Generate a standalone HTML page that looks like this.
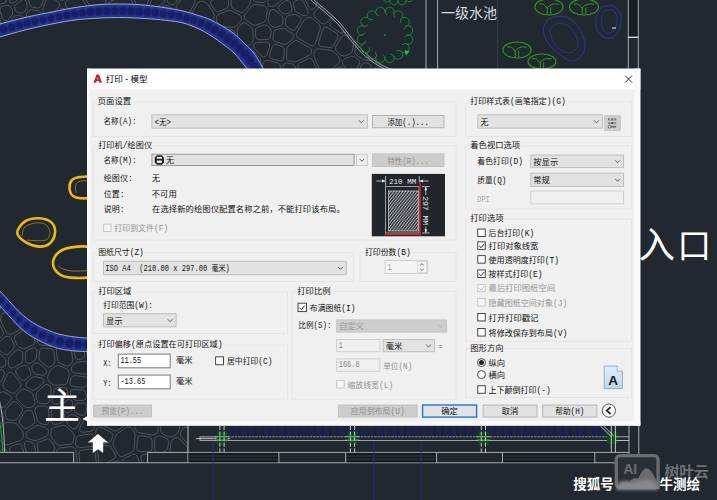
<!DOCTYPE html><html><head><meta charset="utf-8"><title>Print</title><style>html,body{margin:0;padding:0;background:#212830;overflow:hidden}body{width:717px;height:500px;font-family:"Liberation Sans",sans-serif}.sr{position:absolute;left:0;top:0;width:1px;height:1px;overflow:hidden;opacity:0;font-size:1px;line-height:1px;color:transparent;white-space:nowrap}svg text{font-family:"Liberation Mono","Noto Sans CJK SC",monospace}svg text.ss{font-family:"Liberation Sans","Noto Sans CJK SC",sans-serif}</style></head><body><svg width="717" height="500" viewBox="0 0 717 500" style="display:block"><rect x="0" y="0" width="717" height="500" fill="#212830"/>
<clipPath id="cA"><path d="M-6 26L-5.67 25.88L-5.37 25.75L-5.02 25.59L-4.56 25.41L-3.91 25.17L-2.98 24.86L-1.7 24.48L0 24L2.22 23.39L4.91 22.66L7.98 21.83L11.31 20.94L14.79 20.03L18.3 19.13L21.75 18.28L25 17.5L28.12 16.79L31.25 16.12L34.38 15.47L37.5 14.84L40.62 14.23L43.75 13.62L46.88 13.01L50 12.4L53.12 11.77L56.25 11.14L59.38 10.5L62.5 9.87L65.62 9.25L68.75 8.67L71.88 8.11L75 7.6L78.15 7.12L81.32 6.67L84.51 6.24L87.69 5.84L90.84 5.47L93.96 5.14L97.02 4.85L100 4.6L102.9 4.4L105.73 4.24L108.51 4.13L111.25 4.05L113.96 4L116.64 3.98L119.32 3.98L122 4L124.68 4.04L127.34 4.1L129.99 4.2L132.62 4.31L135.24 4.45L137.84 4.61L140.43 4.8L143 5L145.55 5.22L148.07 5.47L150.57 5.74L153.06 6.04L155.54 6.35L158.02 6.68L160.51 7.03L163 7.4L165.52 7.78L168.07 8.18L170.63 8.6L173.19 9.04L175.72 9.49L178.21 9.97L180.64 10.47L183 11L185.3 11.56L187.55 12.15L189.77 12.77L191.94 13.41L194.05 14.06L196.1 14.72L198.09 15.37L200 16L201.77 16.58L203.37 17.09L204.86 17.57L206.31 18.06L207.79 18.61L209.35 19.26L211.07 20.04L213 21L215.21 22.17L217.67 23.51L220.29 24.99L223 26.56L225.71 28.19L228.33 29.84L230.79 31.45L233 33L235 34.53L236.88 36.12L238.65 37.72L240.31 39.31L241.87 40.87L243.34 42.35L244.71 43.74L246 45L247.17 46.1L248.2 47.05L249.11 47.9L249.94 48.69L250.71 49.45L251.46 50.23L252.21 51.06L253 52L253.8 53.03L254.59 54.11L255.37 55.23L256.12 56.38L256.87 57.54L257.59 58.7L258.3 59.86L259 61L259.71 62.19L260.44 63.46L261.17 64.77L261.88 66.06L262.54 67.28L263.12 68.38L263.62 69.31L264 70L264 70L392 70L393 70L392.73 69.9L392.4 69.8L392.01 69.68L391.56 69.53L391.04 69.35L390.45 69.12L389.77 68.84L389 68.5L388.11 68.09L387.1 67.62L385.99 67.1L384.81 66.53L383.59 65.93L382.37 65.3L381.16 64.65L380 64L378.87 63.33L377.73 62.63L376.58 61.9L375.44 61.16L374.3 60.39L373.18 59.61L372.08 58.81L371 58L369.95 57.19L368.93 56.37L367.93 55.54L366.94 54.69L365.96 53.82L364.98 52.91L363.99 51.98L363 51L362 49.98L361 48.91L360 47.82L359 46.69L358 45.54L357 44.37L356 43.19L355 42L354 40.8L353 39.57L352 38.32L351 37.06L350 35.79L349 34.52L348 33.26L347 32L346.03 30.76L345.09 29.52L344.18 28.29L343.25 27.06L342.29 25.82L341.28 24.57L340.19 23.3L339 22L337.7 20.67L336.3 19.32L334.84 17.95L333.31 16.56L331.75 15.17L330.16 13.77L328.58 12.38L327 11L325.35 9.57L323.56 8.06L321.71 6.52L319.88 5L318.11 3.54L316.5 2.19L315.11 0.99L314 0L313.21 -0.78L312.68 -1.38L312.36 -1.84L312.19 -2.19L312.12 -2.45L312.1 -2.65L312.08 -2.82L312 -3L311 -3L-6 -3Z"/></clipPath>
<path clip-path="url(#cA)" d="M123.47 -13.38L121.96 -15.36L112.62 -20.71L109.91 -20.93L104.02 -18.73L102.18 -16.95L102.23 -14.39L107.26 -3.52L109.06 -1.85L111.51 -1.96L122.41 -7.03L123.95 -8.57L124.16 -10.73Z M-1.76 48.59L0.35 48.61L2.01 47.32L8.56 37.24L9.08 35.39L8.44 33.58L4.83 28.75L1.81 27.5L-13.99 29.77L-15.75 30.63L-16.68 32.35L-18.07 39.86L-17.7 42.03L-16.01 43.45Z M240.97 20.6L241.71 17.67L239.99 15.18L231.07 10.61L228.45 10.47L218.62 14.29L216.64 16.65L216.16 19.09L217 21.95L220.59 25.64L222.65 26.6L233.28 27.36L235.9 26.3Z M252.72 24.84L255.63 25.21L263.74 22.23L265.8 19.74L267.38 10.05L265.77 6.61L264.11 5.82L255.15 4.44L252.18 5.58L244.94 14.48L244.34 17.77L245.72 20.05Z M317.87 48.79L315.62 49.37L314.35 51.32L313.95 55.94L320.29 71.62L322.32 73.56L326.22 73.62L327.81 72.88L338.51 63.55L339.99 60.53L339.17 57.21L333.01 51.28L331.18 50.41Z M234.65 32.57L233.66 30.7L231.71 29.86L225.19 29.39L222.88 30.15L221.77 32.31L220.83 43.51L221.58 45.86L223.78 46.97L232.95 47.66L235.53 46.65L236.35 44Z M306.24 15.54L308.09 13.73L307.99 11.15L303.22 1.34L301.71 -0.15L299.59 -0.37L295.76 0.56L293.75 2.06L293.43 4.54L295.04 10.23L296.61 12.18L302.99 15.6Z M17.44 15.19L14.37 16.3L7.8 24.33L7.08 26.28L7.72 28.27L11.28 33.04L13.4 34.29L16.28 34.7L26.49 31.28L28.64 28.49L28.39 26.06L23.79 17.59L21.58 15.97Z M280.47 66.88L280.05 64.6L278.2 63.2L268.07 60.31L265.43 60.6L263.55 62.26L262.41 64.66L262.43 67.45L268.62 80.05L270.39 81.64L272.78 81.57L276.56 79.91L278.42 77.58Z M91.52 8.28L88.85 9.81L83.06 19.24L83 22.48L83.92 24.12L86.6 25.76L97.21 26.11L99.4 25.34L104.5 20.97L105.49 19.42L106.88 14.55L106.75 12.4L105.72 10.02L104.51 8.6L102.72 8.09Z M272.99 37.98L273.45 40.1L275.15 41.44L283.74 44.3L286.77 43.74L292.69 38.9L293.81 35.85L292.36 33.54L284.9 28.74L282.48 28.31L276.22 29.69L274.55 30.64L273.74 32.39Z M75.59 -10.56L76.68 -12.78L75.99 -15.48L71.68 -20.55L68.89 -21.66L50.74 -19.26L47.88 -17.34L46.53 -15.31L45.77 -11.49L46.15 -9.23L48.45 -6.34L60.82 -0.07L62.68 0.25L64.4 -0.54Z M358.61 39.92L356.42 42.4L354.74 51.66L356.04 54.85L363.81 59.89L370.38 60.8L372.26 60.49L373.62 59.17L380.31 47.04L380.42 44.18L378.21 42.37L363.08 38.97Z M202.05 1.38L200.08 1.34L197.84 2.89L189.57 17.11L189.74 20.59L193.09 25.25L195.6 26.58L201.56 26.35L211.9 20.99L213.57 18.78L214.21 15.55L213.73 13.14L207.54 3.9L205.88 2.64Z M382.2 84.81L384.18 83.66L384.89 81.48L384.51 74.29L383.16 71.85L377.94 68.16L375.1 67.74L373.06 69.77L369.17 81.46L369.25 83.67L370.74 85.31L373.72 86.15Z M310.76 45.53L313.51 45.74L315.41 43.73L320.41 28.1L319.54 24.78L312.18 17.97L308.88 17.33L306.1 18.37L304.48 19.72L296.69 32.72L296.29 34.94L298.02 38.15Z M314.53 12.52L313.82 14.76L314.84 16.89L321.68 23.22L323.94 24.07L326.15 23.1L334.41 14.59L335.27 11.86L334.53 7.12L333.15 4.96L330.63 4.5L319.83 7.05L318.08 8.15Z M239.04 44.36L240.44 46.56L243 46.99L248.99 45.44L250.75 44.27L252.65 41.75L253.3 39.64L252.72 29.51L251.34 27.05L245.82 23.27L243.62 22.74L241.62 23.79L237.77 28.11L237 30.71Z M330.79 22.05L329.91 24.65L331.37 26.97L340.27 32.65L342.52 33.1L346.5 31.77L347.35 29.91L348.16 22.19L347.71 20.19L346.14 18.87L339.21 16.18L335.75 16.93Z M343.37 35.6L341.11 37.19L335.67 46.9L335.29 48.94L336.24 50.78L341 55.35L344.32 56.05L350.08 53.92L352.13 51.49L353.87 41.86L352.76 38.81L349.04 35.75L346.47 35.07Z M376.05 60.16L375.73 62.42L377.01 64.32L384.55 69.64L387.45 70.05L394.26 67.68L395.83 66.47L396.4 64.57L396.11 53.52L394.25 50.69L386.59 47.18L384.25 47.05L382.45 48.54Z M127.72 -5.2L124.84 -5.29L110.13 1.56L108.51 3.27L107.62 5.48L107.65 7.94L108.85 10.72L111.12 12.58L127.25 16.04L129.19 15.85L130.66 14.57L134.03 8.97L134.16 5.9L129.48 -3.58Z M311.4 52.77L311.43 49.62L310.11 48.16L297.61 40.91L295.75 40.49L293.98 41.21L288.05 46.06L286.88 48.37L286.42 57.39L287.09 59.52L288.99 60.69L294.65 61.8L296.71 61.52L309.7 54.98Z M318.79 0.92L320.12 3.2L322.71 3.7L328.73 2.28L330.86 0.59L330.92 -2.13L327.76 -9.25L325.78 -11.01L323.16 -10.68L319.62 -8.51L318.11 -5.44Z M151.59 -14.55L149.69 -15.43L147.66 -14.96L134.15 -6.49L132.77 -4.65L132.98 -2.36L136.37 4.51L139.17 6.29L143.92 6.38L145.77 5.84L146.97 4.34L152.77 -10.68Z M81.43 -14.33L79.44 -12.34L79.79 -9.56L88.76 4.23L91.5 5.68L102.71 5.49L105.62 3.48L105.97 -0.09L98.56 -16.15L96.93 -17.74L93.29 -18.41Z M66.21 1.33L65.16 3.33L65.69 5.52L73.53 17.04L75.49 18.37L79.66 18.68L81.14 17.41L86.44 8.77L86.39 5.35L79.34 -5.48L77.08 -6.9L74.52 -6.11Z M260.02 63.63L261.01 60.29L260.22 58.61L251.7 49.2L248.53 48.25L242.36 49.84L240.61 51.01L239.96 53L240.21 65.11L241.88 67.85L245.26 68.7L257.95 65.34Z M270.84 6.48L274.51 5.76L283.85 -1.31L285.09 -4.33L283.73 -13.49L282.18 -15.78L279.42 -16.01L273.5 -13.75L271.56 -11.62L267.64 2.42L268.58 5.65Z M30.81 -5.27L28.89 -3.87L28.47 -1.52L29.73 4.51L30.62 6.14L32.27 7L37.58 8L39.77 7.62L41.19 5.92L44.57 -3.67L44.53 -5.93L43 -7.59L40.76 -7.83Z M12.05 -16.74L9.63 -15.84L8.66 -13.45L9.1 0.17L10 2.29L12.09 3.25L14.29 2.56L21.89 -3.48L23.08 -5.71L22.29 -8.11L15.64 -15.59Z M179.92 -22.57L177.85 -22.5L176.26 -21.17L173.66 -16.9L173.22 -14.83L174.17 -12.94L181.05 -6.24L183.58 -5.35L185.94 -5.56L188.16 -6.76L188.82 -9.19L187.55 -18.32L185.31 -20.95Z M245.33 -10.74L243.01 -12.58L240.18 -11.73L232.3 -4.05L231.34 -1.81L231.21 5.75L232.95 8.65L240.08 12.31L242.2 12.59L244.02 11.48L250.04 4.09L250.48 0.76Z M220.31 -19.85L218.95 -17.15L219.12 -10.57L219.78 -8.71L221.42 -7.59L227.91 -5.68L231.05 -6.46L237.08 -12.34L238.04 -14.85L236.76 -17.2L228.8 -23.13L226.93 -23.76L225.05 -23.18Z M2.63 18.76L4.02 20.51L6.22 20.92L8.15 19.8L12.39 14.61L12.9 11.43L11.53 7.88L8.9 5.55L6.44 5.24L2.13 6.45L0.17 8.03L-0.05 10.53Z M354.54 77.21L354.19 79.57L355.56 81.52L359.63 84.15L362.19 84.56L364.05 84.07L366.26 81.98L371.13 67.34L370.81 64.65L368.53 63.17L365.35 62.72L362.15 64.27Z M47.03 17.87L50.44 16.87L59.21 6.43L59.89 3.74L58.2 1.52L50.68 -2.3L48.04 -2.41L46.21 -0.51L42.91 8.87L42.93 11.06L44.74 15.86Z M167.19 -11.28L165.76 -9.84L165.49 -7.83L167.19 1.18L168.72 3.34L170.81 4.57L173.14 4.93L175.09 3.59L178.47 -1.47L178.99 -3.58L178.04 -5.54L172.09 -11.34L170.34 -12.21Z M268.65 -10.87L268.49 -13.05L266.96 -14.61L255.31 -20.2L253.43 -20.48L251.73 -19.64L248.09 -16.2L247.14 -14.5L247.36 -12.57L252.99 -0.01L255.42 1.85L261.9 2.85L264.12 2.37L265.47 0.54Z M309.22 7.72L310.7 9.2L312.79 9.44L315.85 6.77L316.55 4.41L315.59 -4.6L314.74 -6.46L312.94 -7.42L309.27 -8.04L307.2 -7.7L305.79 -6.15L304.81 -3.86L304.87 -1.2Z M403.53 75.73L403.38 73.87L402.21 72.41L398.93 70.17L396.07 69.8L389.31 72.16L387.71 73.4L387.17 75.35L387.6 83.52L388.67 85.73L390.86 86.7L398.4 86.96L400.47 86.29L401.64 84.44Z M195.8 -2.64L197.84 -2.03L199.81 -2.84L200.83 -4.71L203.34 -19.8L202.52 -22.52L199.94 -24.4L198.01 -24.19L192.07 -21.55L190.57 -20.18L190.2 -18.18L191.78 -6.77L193.07 -4.62Z M219.96 -5.31L216.91 -4.62L211.52 0.24L210.49 2.23L211 4.4L214.93 10.25L216.62 11.53L218.74 11.46L226.57 8.41L228.04 7.26L228.62 5.48L228.71 -0.29L228.09 -2.24L226.42 -3.41Z M149.57 4.82L149.67 7.36L151.59 9.02L154.12 8.76L162.84 3.88L164.17 2.44L164.42 0.49L162.84 -7.83L160.46 -10.34L158.59 -10.79L156.35 -10.52L154.85 -8.84Z M176.29 6.47L176.03 9.58L178.26 14.44L180.49 16.24L184.06 17.02L186.03 16.82L187.5 15.5L194.61 3.27L194.98 1L193.73 -0.93L191.36 -2.65L189.19 -3.25L183.89 -2.76L181.52 -1.36Z M261.48 56.13L263.42 57.15L265.56 56.68L266.9 54.94L269.64 46.2L269.13 43.29L266.46 42.04L256.86 42.43L254.12 44.12L253.48 46.19L254.3 48.2Z M274.92 9.98L272.85 9.24L270.79 10L269.71 11.92L268.3 20.55L269.14 23.27L272.06 26.35L275.07 27.28L280.29 26.13L282.08 25.03L282.81 23.07L282.91 18.2L281.76 15.67Z M342.24 68.04L340.04 66.92L337.7 67.7L332.8 71.98L331.7 74.53L333.01 76.97L341.36 83.07L344.49 83.44L348.45 81.76L350.32 79.56L349.64 76.74Z M287.14 62.97L284.73 63.46L283.38 65.51L281.2 76.89L281.51 78.97L283.05 80.41L293.93 85.24L296.05 85.4L297.9 84.07L298.45 81.51L295.26 66.55L292.75 64.08Z M303.98 -8.51L303.9 -11.2L301.54 -15.94L298.65 -17.72L289.42 -17.63L287.02 -16.51L286.29 -13.96L287.72 -4.28L290.01 -1.58L292.31 -1.27L300.31 -3.22L302.5 -5.06Z M349.83 31.17L350.98 33.98L354.57 36.94L357.56 37.52L359.23 37L361.42 34.55L363.75 22.43L363.43 20.32L361.85 18.88L357.56 17.06L354.55 17.34L352.3 18.82L350.88 21.16Z M291.5 29.9L293.96 30.32L295.98 28.85L300.63 21.09L300.97 18.59L299.4 16.62L295.46 14.52L292.86 14.33L287.6 16.23L286.09 17.37L285.49 19.17L285.38 24.15L286.85 26.91Z M6.12 -11.36L4.7 -13.92L1.8 -14.25L-9.57 -9.98L-11.29 -8.43L-11.52 -6.13L-9.53 1.04L-7.61 3.17L-3.67 4.71L-1.64 4.81L4.16 3.18L5.88 1.99L6.49 -0Z M261 82.08L263.28 81.67L264.69 79.83L264.48 77.52L260.76 69.95L259.21 68.45L257.07 68.27L249.14 70.36L247.09 72.03L246.99 74.66L248.42 78.16L250.78 80.1Z M276.29 44.56L273.82 44.75L272.23 46.64L269.71 54.66L269.95 57.14L271.89 58.7L279.71 60.92L282.45 60.45L283.78 58.01L284.21 49.67L283.65 47.7L282.02 46.47Z M167.86 5.86L164.68 5.82L156.3 10.52L154.87 12.19L154.85 14.39L158.5 24.64L160.58 26.63L163.41 26.15L174.29 18.15L175.49 16.38L175.31 14.25L173.22 9.67L171.93 8.24Z M58.29 27.19L60.89 26.68L69.14 20.76L70.43 18.71L69.92 16.36L65.3 9.55L62.81 8.16L60.2 9.29L52.71 18.21L51.96 20.11L52.52 22.08L54.91 25.54Z M213.74 47.47L216.61 47.22L218.12 44.77L219.38 29.71L218.49 27.21L215.81 24.45L214.03 23.53L212.05 23.84L205.74 27.11L204.16 28.99L204.38 31.44L212.01 45.95Z M26.9 8.56L27.41 6.11L26.55 1.98L25.46 0.18L23.48 -0.53L21.49 0.16L15.53 4.9L14.45 6.54L15.38 10.63L17.73 12.59L21.33 13.28L24.5 11.99Z M209.24 -19.7L206.83 -19.17L205.52 -17.08L203.32 -3.79L203.74 -1.61L205.68 -0.16L208.82 -0.83L215.5 -6.84L216.56 -9.31L216.38 -15.83L215.61 -17.83L213.75 -18.9Z M279.44 5.29L278.18 7.75L279.32 10.26L283.12 13.42L286.23 13.96L289.95 12.62L291.7 11.08L291.93 8.77L290.18 2.59L288.14 0.44L285.22 0.92Z M-1.88 25.4L0.38 23.92L0.71 21.24L-3.32 8.89L-5.19 6.91L-7.31 6.08L-9.43 6L-11.12 7.25L-19.35 19.33L-19.47 22.75L-17.77 25.67L-16.39 26.94L-14.55 27.22Z M31.69 9.54L28.48 10.85L26.58 13.56L26.39 16.92L29.28 22.24L31.28 23.81L33.79 23.43L40.49 19.23L41.82 17.54L41.78 15.39L40.81 12.81L38.41 10.8Z M318.56 42.43L318.91 45.13L321.22 46.58L329.99 47.65L331.83 47.32L333.17 46.04L337.82 37.75L338.13 35.41L336.75 33.49L327.52 27.6L324.71 27.29L322.75 29.33Z M344.6 58.72L342.33 61.73L342.92 64.82L349.4 72.44L352.11 73.56L354.59 71.99L359.33 63.94L359.7 61.64L358.42 59.7L354.13 56.68L351.18 56.29Z M255.73 36.72L256.78 38.91L259.06 39.74L267.5 39.4L269.53 38.57L270.55 36.63L271.29 31.05L270.44 28.43L267.75 25.59L264.33 24.79L257.48 27.3L255.9 28.54L255.38 30.48Z M300.21 77.29L301.94 79.5L304.75 79.49L315.36 74.26L316.93 72.53L316.91 70.19L312.86 60.18L311.02 58.38L308.45 58.52L299.6 62.97L298.15 64.45L297.91 66.5Z" fill="none" stroke="#5c6169" stroke-width="0.8"/>
<clipPath id="cB"><path d="M-6 299L-5.56 299.51L-5.02 300.16L-4.37 300.94L-3.62 301.81L-2.81 302.77L-1.92 303.8L-0.98 304.89L0 306L1.06 307.19L2.22 308.48L3.46 309.85L4.75 311.27L6.07 312.73L7.41 314.18L8.72 315.62L10 317L11.25 318.36L12.5 319.74L13.75 321.13L15 322.5L16.25 323.85L17.5 325.16L18.75 326.41L20 327.6L21.25 328.72L22.5 329.8L23.75 330.83L25 331.81L26.25 332.76L27.5 333.67L28.75 334.55L30 335.4L31.25 336.21L32.5 336.98L33.75 337.71L35 338.4L36.25 339.07L37.5 339.72L38.75 340.36L40 341L41.25 341.63L42.5 342.25L43.75 342.86L45 343.45L46.25 344.02L47.5 344.57L48.75 345.1L50 345.6L51.22 346.07L52.38 346.52L53.53 346.95L54.69 347.35L55.88 347.73L57.15 348.1L58.51 348.46L60 348.8L61.66 349.13L63.47 349.46L65.39 349.77L67.38 350.06L69.38 350.34L71.34 350.59L73.23 350.81L75 351L76.66 351.15L78.28 351.27L79.85 351.36L81.38 351.43L82.85 351.47L84.28 351.52L85.66 351.56L87 351.6L88.33 351.65L89.67 351.68L90.99 351.71L92.25 351.74L93.42 351.76L94.45 351.77L95.33 351.79L96 351.8L96 351.8L96 426L188 426L188 452.4L147.6 452.4L147.6 463L73.6 463L73.6 452.4L-6 452.4Z"/></clipPath>
<path clip-path="url(#cB)" d="M85.59 392.54L84.58 390.83L82.76 390.04L73.81 389.2L71.24 390.13L70.33 392.72L70.56 394.92L71.49 396.86L74.23 399.58L76.54 400.51L83.38 400.37L85.83 399.15L86.45 396.49Z M12.78 373.25L10.92 372.09L8.76 372.39L7.29 374.01L3.09 384.34L3 386.47L4.69 389.07L11.41 392.94L13.47 393.33L15.33 392.37L20.21 387.23L21.09 385.18L20.42 383.06Z M-21.02 445.54L-23.08 447.71L-22.44 450.63L-14.47 460.1L-11.74 461.41L-9.78 461.28L-8.27 460.02L-0.26 447.4L-0.32 443.87L-1.94 441.52L-3.57 440.29L-5.61 440.3Z M119.11 409.06L119.38 412.35L126.98 422.88L129.86 424.31L132.73 423.34L142.01 413.4L142.82 411.79L143.68 407.14L142.59 404.11L130.84 394.24L128.13 393.56L125.92 395.28Z M25.47 325.81L26.82 324.07L26.29 320.84L25.21 319.47L15.02 312.16L12.85 311.58L4.72 312.35L2.75 313.28L1.51 315.13L0.5 318.86L0.72 321.13L6.12 331.92L8.23 333.6L10.41 334.13L12.86 333.73Z M86.49 361.76L84.12 361.21L76.44 362.46L74.47 363.6L71.6 367.13L71.29 370.83L73.9 372.89L85.19 374.28L87.84 373.37L88.76 370.72L87.97 364.09Z M94.72 420.22L97.01 420.7L99.01 419.49L104.77 412.01L105.43 409.92L104.6 407.9L100.92 403.88L98.43 402.83L92.88 403.06L90.93 403.83L89.87 405.64L88.29 413.62L88.48 415.49L89.68 416.93Z M70.98 469.18L72.86 468.22L76.14 464.77L77.01 462.29L76.01 450.8L75.26 449.01L74.15 447.7L71.32 446.58L59.68 448L57.15 449.87L54.78 455.18L54.61 457.28L57.41 468.19L58.73 470.05L60.95 470.56Z M118.44 455.1L120.28 456.62L122.66 456.43L132.31 451.65L134.09 449.03L135.17 434.77L134.71 432.85L131.99 428.41L129.79 426.93L126.24 427.29L117.45 433.62L116.39 434.93L113.02 442.6L113.14 445.42Z M-19.89 353.85L-18 354.72L-15.97 354.25L-6.59 348.36L-5.02 345.54L-6.42 342.27L-16.79 335.54L-19.05 335.06L-21.04 336.24L-26.67 343.35L-27.36 345.56L-26.38 347.65Z M22.36 438.96L23.27 436.71L23.24 432.96L22.53 430.95L17.05 424.22L14.82 423.05L7.29 422.45L4.75 423.41L-0.88 429.18L-1.78 431.56L-1.55 436.62L-1 438.29L2.57 443.49L4.37 444.77L6.95 444.91L20.49 440.37Z M8.67 365.07L9.5 366.95L11.3 367.94L13.34 367.62L21.14 363.55L22.85 360.64L22.69 353.51L22.1 351.72L18.68 349.87L16.82 349.77L15.22 350.72L9.04 357.48L8.21 359.92Z M37.86 342.5L38.84 344.15L40.58 344.94L52.66 346.45L55.27 345.58L58.71 342.27L59.69 339.76L59.06 329.77L57.62 327.3L51.94 323.57L49.24 323.19L37.27 326.88L35.44 328.34L35.1 330.66Z M101.15 427.34L98.65 427.16L96.8 428.83L95.77 431.04L95.67 433.52L98.51 441.03L99.73 442.56L101.61 443.1L108.06 442.89L110.89 440.98L112.79 436.65L112.87 434.29L111.31 432.52Z M152.1 435.1L156.15 433.95L158.07 431.06L158.16 424.48L156.48 421.62L146.3 416.12L144.27 415.78L142.44 416.75L135.32 424.38L134.47 426.24L134.92 428.24L136.65 431.05L138.77 432.51Z M156.62 471.35L157.59 473.94L160.21 474.8L162.75 474.48L164.75 473.42L173.74 463.15L174.54 460.94L173.6 458.78L169.34 454.52L166.11 453.73L159.98 455.68L157.76 458.45Z M53.4 427.72L51.73 428.83L51.04 430.71L50.89 435.28L51.5 437.26L56.49 444.11L59.46 445.41L70.28 444.09L72.04 443.29L73.02 441.63L74.29 436.06L73.3 432.96L65.45 425.96L62.48 425.26Z M183.1 421.22L183.72 423.58L185.82 424.82L199.41 426.76L201.3 426.45L202.68 425.11L204.77 421.22L205.08 419.03L202.4 406.64L201.05 404.65L198.7 404.17L187.38 406.21L185.63 407.15L184.77 408.93Z M92.49 466.62L94.55 466.49L96.1 465.12L96.49 463.08L94.88 451.83L93.68 449.76L91.39 449.1L81.72 450.1L79.58 451.25L78.86 453.56L79.5 460.95L80.24 462.73L81.86 463.76Z M74.14 409.3L74.38 411.48L75.99 412.98L81.46 415.26L84.16 415.13L85.77 412.96L87 406.73L86.33 404.09L83.85 402.96L78.1 403.08L76.19 403.76L75.1 405.46Z M67.45 390.25L66.36 388.16L64.13 387.38L56.7 387.72L54.71 388.53L53.68 390.4L52.04 400.51L52.65 402.97L54.86 404.21L58.26 403.67L66.66 397.16L67.88 394.3Z M2.67 367.2L5.09 366.19L5.94 363.72L5.61 359.97L4.53 357.85L-2.57 351.6L-4.42 350.82L-6.38 351.3L-12.81 355.33L-14.27 357.58L-13.51 360.16L-8.44 365.9L-6.12 366.98Z M179.69 428.23L179.66 425.54L177.6 423.83L165.81 420.67L162.34 421.61L160.76 424.32L160.67 431.08L162.52 434.03L168.87 436.98L171.73 436.89L176.14 434.52L177.55 433.01Z M50.58 369.94L47.71 376.31L47.62 378.3L49.05 381.44L52.48 384.43L54.73 385.21L64.2 384.78L66.02 384.1L67.12 382.49L69.35 374.91L68.45 370.64L66.62 368.77L58.6 365.59L55.42 366.07Z M54.66 406.8L52.14 407.64L51.13 410.1L51.56 421.47L52.86 423.92L55.6 424.43L61.73 422.77L63.96 420.59L64.88 417.45L64.11 414.31L57.83 407.87Z M46.8 366.42L48.8 367.13L50.8 366.43L53.85 364L55.03 361.08L53.79 351.62L52.87 349.77L51.01 348.86L43.28 347.9L40.9 348.57L39.71 350.74L38.92 358.18L40.09 361.01Z M89.43 397.95L90.6 399.8L92.68 400.47L97.54 400.27L100.37 398.3L102.88 392.23L102.84 389.7L99.22 381.58L96.6 379.7L95.18 379.57L92.09 381.18L88.13 388.19L87.79 390.45Z M-6.24 406.08L-8.69 405.74L-10.65 407.26L-13.48 412.25L-13.8 414.59L-11.97 421.98L-10.46 423.99L-5.55 426.8L-3.52 427.2L-1.67 426.26L2.74 421.74L3.6 418.94L2.42 412.47L0.9 410.29Z M101.14 468.44L99.74 469.82L99.4 471.77L99.91 475.27L100.59 476.83L106.71 484.37L108.57 485.5L110.72 485.17L122.54 478.75L123.98 477.15L124.07 475L120.37 463.02L118.57 461.02L115.89 461.1Z M16.75 394.65L15.87 396.91L16.83 399.14L24.68 406.79L27.27 407.68L31.22 407.24L34.11 405.44L35.06 402.29L33.19 394.84L31.64 392.82L25.2 389.24L23.16 388.87L21.32 389.83Z M91.79 374.1L92.73 376.01L94.66 376.91L98.49 376.62L99.79 375.07L104.67 362.7L104.64 360.26L102.89 358.56L100.46 358.57L92.65 361.85L91.13 363.19L90.72 365.18Z M75.35 443.1L76.64 446.61L79.41 447.73L93.42 446.27L95.81 444.77L96.08 441.96L93.83 436.01L92.48 434.39L90.42 433.97L79.23 435.46L77.5 436.27L76.53 437.92Z M28.81 367.59L26.85 365.68L23.11 365.46L17.19 368.54L15.55 370.7L16.15 373.35L20.85 379.39L23.05 380.6L25.45 379.85L29.78 376.16L30.8 374.53L30.7 372.6Z M34.73 360.5L36.32 358.06L37.04 351.24L36.51 349.12L34.74 347.83L32.55 347.98L27.19 350.38L25.29 353.37L25.45 360.24L26.06 362.06L27.77 363.25L30.4 362.99Z M57.6 360.63L59.59 363.19L66.38 365.88L68.37 366L70.04 364.92L72.22 362.25L72.88 359.64L70.67 347.89L68.48 345.43L63.27 343.8L60.1 344.54L57.16 347.36L56.21 350.09Z M25.85 433.87L26.46 437.2L28.01 438.36L34.05 440.47L36.24 440.44L46.28 436.63L48.34 433.74L48.42 431.2L47.86 429.28L46.26 428.07L38.62 425.47L35.89 425.79L27.35 431.13Z M50.09 454.87L52.92 452.97L54.75 448.86L54.41 445.68L50.51 440.32L48.84 439.14L46.79 439.21L39.15 442.11L37.49 443.54L37.13 445.69L38.4 452.51L39.54 454.41L41.64 455.12Z M20.65 290.36L20.72 288.23L19.43 286.54L17.14 285.7L6.06 285.91L3.57 287.19L0.85 290.79L0.28 293.42L3.37 307.06L4.62 308.95L6.8 309.54L11.52 309.09L14.2 307.06Z M69.86 382.38L70.28 385.08L72.63 386.47L83.37 387.48L86.46 385.87L88.76 381.79L88.83 378.78L86.36 377.04L74.65 375.6L72.5 376.11L71.19 377.88Z M65.63 412.15L67.25 413L69.06 412.72L71.16 410.52L72.82 403.86L72.04 401.07L69.27 399.35L67.3 399.96L62.17 403.93L61.04 406.04L61.87 408.29Z M26.73 382.18L25.63 384.93L27.26 387.41L31.9 389.99L33.76 390.38L35.52 389.65L42.94 383.41L44.07 381.32L43.44 379.03L41.41 377.8L34.87 376.72L32.27 377.45Z M-4.79 459.39L-5.08 462.22L-3 464.17L6.85 467.12L10.15 466.19L12.59 462.61L12.23 460.71L6.61 450.31L4.99 448.86L2.82 448.79L1.09 450.12Z M157.99 435.98L155.1 437.84L154.6 439.63L154.85 450.28L156.19 452.81L159.01 453.26L165.3 451.26L167.49 448.73L168.54 442.26L168.2 440.25L166.72 438.85L160.62 436.01Z M80.36 345.04L77.59 344.55L75.71 345.1L73.89 346.49L73.48 348.74L75.01 356.91L76.31 358.93L78.65 359.46L81.8 358.95L83.7 357.88L84.47 355.83L84.52 349.72L83.22 347.13Z M143.87 454.32L141.22 455.7L140.86 458.66L145.21 470.09L147.48 472.07L150.23 472.7L152.83 472.17L154.14 469.87L155.2 457.84L154.38 455.41L152.03 454.36Z M174.47 455.97L176.3 456.88L178.31 456.5L186.37 451.94L187.95 449.68L187.18 447.02L179.5 438.45L177.67 437.43L175.6 437.76L172.94 439.2L171.29 441.5L169.98 449.6L170.87 452.37Z M28.5 441.29L26.23 441.35L24.57 442.9L24.36 445.16L27.79 457.59L29.01 459.34L31.05 459.94L33.02 459.12L35.09 457.26L36.09 454.3L34.37 445.04L32.27 442.6Z M69.19 415.57L67.58 417.51L66.55 421L67.49 424.29L72.08 428.39L74.8 429.14L77.06 427.46L80.21 421.3L80.37 418.74L78.6 416.88L73.37 414.7L70.68 414.81Z M111.12 447.15L108.22 445.49L100.25 445.74L98.08 446.69L97.16 449.41L98.95 461.93L100.63 464.31L103.55 464.34L113.92 459.18L115.54 457.27L115.3 454.78Z M-1.27 391.05L-0.27 389.06L-0.81 386.91L-2.62 385.62L-12.84 382.88L-15.21 383.17L-16.82 384.05L-18.47 386.6L-18.79 390.73L-17.56 393.51L-12.25 397.64L-10.14 398.3L-8.1 397.44Z M48.5 409.39L47.58 407.27L45.46 406.32L38.78 405.98L35.73 407.47L34.8 410.7L37.63 420.91L39.69 423.09L44.74 424.81L47.68 424.34L48.97 421.65Z M101.6 420.4L101.01 423.05L102.68 425.2L113.83 430.88L117.16 430.63L122.59 426.72L123.88 424.63L123.32 422.25L116.83 413.26L114.64 411.96L110.49 411.43L107.55 412.65Z M79.38 482.53L81.33 484.32L83.96 484.03L95.56 477.11L97.08 473.9L96.88 472.5L94.55 469.87L80.73 466.15L77.58 467.03L75.7 469.01L75.07 472.47Z M45.99 403.74L48.16 403.03L49.31 401.06L51.3 388.85L50.24 385.93L47.17 384.26L45.08 385.01L36.97 391.82L35.93 395.05L37.43 401.04L38.5 402.73L40.37 403.46Z M-23.49 315.14L-24.53 317.22L-23.89 319.46L-20.06 324.45L-18.31 325.6L-16.22 325.43L-3.69 319.86L-1.76 317.24L-1.99 314.95L-3.71 313.41L-14.46 309.32L-17.75 309.94Z M191.78 448.26L193.82 449.32L196.25 448.71L203.52 443.21L204.64 441.61L204.63 439.66L201.97 431.56L199.38 429.39L185.45 427.4L183.45 427.76L182.08 429.26L180.49 432.81L181.02 436.25Z M-23.49 439.91L-21.93 441.99L-19.35 442.22L-6.41 437.82L-4.8 436.6L-4.25 434.65L-4.36 432.2L-5.96 429.56L-11.82 426.21L-14.22 425.89L-21.55 427.81L-23.5 429.29L-24.61 431.2L-24.97 433.54Z M32.2 329.66L30.3 327.43L27.38 327.68L15.73 334.99L14.4 336.67L14.43 338.81L16.79 345.22L18.7 347.11L22.66 348.56L25.06 348.48L33.09 344.9L34.65 343.4L34.9 341.25Z M21.86 462.34L24.64 461.23L25.29 458.3L21.95 446.18L20.36 444.21L17.84 444L11.55 446.11L9.6 447.97L9.76 450.66L14.9 460.19L17.37 461.85Z M136.75 448.26L137.59 450.68L139.93 451.71L148.99 451.75L151.29 450.79L152.2 448.48L152.02 440.3L151.26 438.31L149.43 437.23L141.29 435.65L138.74 436.25L137.49 438.55Z M87.07 356.54L87.72 358.5L89.44 359.66L91.51 359.52L101.14 355.47L102.6 354.23L103.09 352.38L102.96 349.19L101.74 346.81L99.15 346.18L89.7 348.02L87.85 349.11L87.11 351.13Z M-2.21 383.04L0.04 382.81L1.58 381.15L4.42 374.17L4.13 371.21L1.53 369.77L-5.22 369.6L-8.19 371.43L-10.76 376.83L-10.78 379.55L-8.7 381.3Z M-13.57 293.75L-15.84 294.91L-16.54 297.35L-15.64 304.29L-13.6 306.87L-3.57 310.68L-1.32 310.69L0.38 309.21L0.69 306.98L-1.87 295.7L-3.07 293.84L-5.19 293.21Z M-5.61 398.67L-6.6 401.36L-5.04 403.77L0.79 407.2L2.92 407.61L4.82 406.56L10.66 399.93L11.42 397.29L9.85 395.04L4.74 392.09L2.77 391.69L0.95 392.53Z M5.75 409.44L5 412.12L5.95 417.35L6.95 419.15L8.85 419.97L14.31 420.41L17.23 418.99L22.14 411.6L22.66 409.49L21.71 407.54L16.44 402.39L14.08 401.48L11.8 402.56Z M126.67 474.61L128.32 476.54L130.86 476.66L140.16 473.16L141.95 471.48L142.03 469.03L137.1 456.1L135.28 454.26L132.69 454.37L124.49 458.43L122.97 460.03L122.85 462.24Z M-14.98 327.72L-16.58 329.29L-16.75 331.52L-15.42 333.33L-5.43 339.82L-3.41 340.32L-1.51 339.48L2.54 335.72L3.51 333.95L3.22 331.94L-0.45 324.61L-2.23 323.02L-4.61 323.11Z M46.45 372.25L46.54 370.31L45.48 368.7L38.92 363.4L37.19 362.72L35.38 363.13L33.2 364.38L31.81 366.05L31.83 368.21L33.33 372.24L35.77 374.24L42.58 375.36L44.66 374.98Z M23.03 427.46L24.99 428.6L27.21 428.15L33.48 424.23L34.77 422.68L34.87 420.66L32.58 412.42L31.29 410.62L27.52 410.27L25.21 411.68L19.76 419.87L19.23 421.8L19.94 423.66Z M179.91 458.58L178.3 461.06L179.41 463.8L190.23 473L192.68 473.74L194.79 473.48L196.98 472.21L197.56 469.74L194.92 454.99L193.13 452.66L190.2 452.77Z M11.56 338.54L9.3 336.54L7.93 336.21L5.01 336.97L-1.22 342.76L-2.19 344.52L-2.49 346.14L-1.45 349.12L4.29 354.17L6.58 354.96L8.76 353.93L13.48 348.76L14.12 345.5Z M79.86 427.68L79.61 429.94L80.92 431.8L83.14 432.31L91.17 431.24L93.65 429.43L94.91 426.73L95.09 424.5L93.76 422.7L88.24 419.09L85.66 418.68L83.64 420.31Z" fill="none" stroke="#5c6169" stroke-width="0.8"/>
<path d="M-6 26L-5.67 25.88L-5.37 25.75L-5.02 25.59L-4.56 25.41L-3.91 25.17L-2.98 24.86L-1.7 24.48L0 24L2.22 23.39L4.91 22.66L7.98 21.83L11.31 20.94L14.79 20.03L18.3 19.13L21.75 18.28L25 17.5L28.12 16.79L31.25 16.12L34.38 15.47L37.5 14.84L40.62 14.23L43.75 13.62L46.88 13.01L50 12.4L53.12 11.77L56.25 11.14L59.38 10.5L62.5 9.87L65.62 9.25L68.75 8.67L71.88 8.11L75 7.6L78.15 7.12L81.32 6.67L84.51 6.24L87.69 5.84L90.84 5.47L93.96 5.14L97.02 4.85L100 4.6L102.9 4.4L105.73 4.24L108.51 4.13L111.25 4.05L113.96 4L116.64 3.98L119.32 3.98L122 4L124.68 4.04L127.34 4.1L129.99 4.2L132.62 4.31L135.24 4.45L137.84 4.61L140.43 4.8L143 5L145.55 5.22L148.07 5.47L150.57 5.74L153.06 6.04L155.54 6.35L158.02 6.68L160.51 7.03L163 7.4L165.52 7.78L168.07 8.18L170.63 8.6L173.19 9.04L175.72 9.49L178.21 9.97L180.64 10.47L183 11L185.3 11.56L187.55 12.15L189.77 12.77L191.94 13.41L194.05 14.06L196.1 14.72L198.09 15.37L200 16L201.77 16.58L203.37 17.09L204.86 17.57L206.31 18.06L207.79 18.61L209.35 19.26L211.07 20.04L213 21L215.21 22.17L217.67 23.51L220.29 24.99L223 26.56L225.71 28.19L228.33 29.84L230.79 31.45L233 33L235 34.53L236.88 36.12L238.65 37.72L240.31 39.31L241.87 40.87L243.34 42.35L244.71 43.74L246 45L247.17 46.1L248.2 47.05L249.11 47.9L249.94 48.69L250.71 49.45L251.46 50.23L252.21 51.06L253 52L253.8 53.03L254.59 54.11L255.37 55.23L256.12 56.38L256.87 57.54L257.59 58.7L258.3 59.86L259 61L259.71 62.19L260.44 63.46L261.17 64.77L261.88 66.06L262.54 67.28L263.12 68.38L263.62 69.31L264 70L248 70L247.47 69.31L246.77 68.38L245.93 67.28L245 66.06L244.01 64.77L242.98 63.46L241.97 62.19L241 61L240.05 59.86L239.09 58.7L238.12 57.54L237.12 56.38L236.12 55.23L235.09 54.11L234.05 53.03L233 52L231.94 51.04L230.87 50.13L229.79 49.27L228.69 48.44L227.57 47.61L226.41 46.77L225.23 45.91L224 45L222.73 44.04L221.44 43.06L220.11 42.05L218.75 41.03L217.36 40.01L215.94 38.99L214.48 37.98L213 37L211.5 36.03L209.98 35.07L208.45 34.11L206.88 33.16L205.26 32.22L203.58 31.29L201.83 30.39L200 29.5L198.09 28.62L196.1 27.72L194.05 26.84L191.94 25.97L189.77 25.14L187.55 24.36L185.3 23.64L183 23L180.64 22.45L178.21 21.97L175.72 21.56L173.19 21.19L170.63 20.87L168.07 20.57L165.52 20.28L163 20L160.51 19.73L158.02 19.48L155.54 19.26L153.06 19.06L150.57 18.88L148.07 18.71L145.55 18.55L143 18.4L140.43 18.25L137.84 18.12L135.24 17.99L132.62 17.88L129.99 17.78L127.34 17.7L124.68 17.64L122 17.6L119.32 17.58L116.64 17.58L113.96 17.59L111.25 17.63L108.51 17.68L105.73 17.76L102.9 17.87L100 18L97.02 18.16L93.96 18.33L90.84 18.53L87.69 18.75L84.51 19L81.32 19.29L78.15 19.62L75 20L71.88 20.43L68.75 20.9L65.62 21.42L62.5 21.98L59.38 22.56L56.25 23.16L53.12 23.78L50 24.4L46.88 25.03L43.75 25.68L40.62 26.35L37.5 27.04L34.38 27.74L31.25 28.47L28.12 29.22L25 30L21.75 30.84L18.3 31.77L14.79 32.74L11.31 33.73L7.98 34.68L4.91 35.57L2.22 36.35L0 37L-1.7 37.5L-2.98 37.9L-3.91 38.2L-4.56 38.44L-5.02 38.62L-5.37 38.76L-5.67 38.88L-6 39Z" fill="#24339c"/>
<g fill="#181f5e" stroke="#1e2980" stroke-width="1.1"><circle cx="-4.19" cy="31.86" r="3.8"/><circle cx="3.55" cy="29.48" r="3.86"/><circle cx="11.42" cy="27.29" r="3.82"/><circle cx="19.27" cy="25.19" r="3.79"/><circle cx="27.08" cy="23.24" r="3.76"/><circle cx="35.01" cy="21.46" r="3.71"/><circle cx="42.95" cy="19.81" r="3.67"/><circle cx="50.95" cy="18.21" r="3.65"/><circle cx="58.93" cy="16.62" r="3.67"/><circle cx="66.88" cy="15.13" r="3.72"/><circle cx="74.71" cy="13.86" r="3.8"/><circle cx="82.68" cy="12.84" r="3.91"/><circle cx="90.66" cy="12.03" r="4.03"/><circle cx="98.78" cy="11.39" r="4.13"/><circle cx="106.81" cy="10.97" r="4.19"/><circle cx="114.86" cy="10.79" r="4.21"/><circle cx="122.94" cy="10.81" r="4.22"/><circle cx="130.99" cy="11.03" r="4.2"/><circle cx="139.09" cy="11.45" r="4.17"/><circle cx="147.21" cy="12.03" r="4.1"/><circle cx="155.26" cy="12.79" r="3.99"/><circle cx="163.23" cy="13.74" r="3.87"/><circle cx="171.31" cy="14.85" r="3.75"/><circle cx="179.12" cy="16.16" r="3.65"/><circle cx="186.5" cy="17.92" r="3.62"/><circle cx="193.78" cy="20.26" r="3.72"/><circle cx="201.06" cy="22.98" r="3.95"/><circle cx="208.12" cy="26.1" r="4.18"/><circle cx="214.88" cy="29.92" r="4.32"/><circle cx="221.49" cy="34.07" r="4.48"/><circle cx="228.06" cy="38.68" r="4.64"/><circle cx="234.36" cy="43.63" r="4.5"/><circle cx="239.61" cy="48.63" r="4.38"/><circle cx="244.94" cy="54.13" r="4.6"/><circle cx="249.9" cy="60.31" r="4.58"/><circle cx="254.03" cy="66.4" r="4.35"/><circle cx="256" cy="70" r="4.96"/></g>
<path d="M-6 26L-5.67 25.88L-5.37 25.75L-5.02 25.59L-4.56 25.41L-3.91 25.17L-2.98 24.86L-1.7 24.48L0 24L2.22 23.39L4.91 22.66L7.98 21.83L11.31 20.94L14.79 20.03L18.3 19.13L21.75 18.28L25 17.5L28.12 16.79L31.25 16.12L34.38 15.47L37.5 14.84L40.62 14.23L43.75 13.62L46.88 13.01L50 12.4L53.12 11.77L56.25 11.14L59.38 10.5L62.5 9.87L65.62 9.25L68.75 8.67L71.88 8.11L75 7.6L78.15 7.12L81.32 6.67L84.51 6.24L87.69 5.84L90.84 5.47L93.96 5.14L97.02 4.85L100 4.6L102.9 4.4L105.73 4.24L108.51 4.13L111.25 4.05L113.96 4L116.64 3.98L119.32 3.98L122 4L124.68 4.04L127.34 4.1L129.99 4.2L132.62 4.31L135.24 4.45L137.84 4.61L140.43 4.8L143 5L145.55 5.22L148.07 5.47L150.57 5.74L153.06 6.04L155.54 6.35L158.02 6.68L160.51 7.03L163 7.4L165.52 7.78L168.07 8.18L170.63 8.6L173.19 9.04L175.72 9.49L178.21 9.97L180.64 10.47L183 11L185.3 11.56L187.55 12.15L189.77 12.77L191.94 13.41L194.05 14.06L196.1 14.72L198.09 15.37L200 16L201.77 16.58L203.37 17.09L204.86 17.57L206.31 18.06L207.79 18.61L209.35 19.26L211.07 20.04L213 21L215.21 22.17L217.67 23.51L220.29 24.99L223 26.56L225.71 28.19L228.33 29.84L230.79 31.45L233 33L235 34.53L236.88 36.12L238.65 37.72L240.31 39.31L241.87 40.87L243.34 42.35L244.71 43.74L246 45L247.17 46.1L248.2 47.05L249.11 47.9L249.94 48.69L250.71 49.45L251.46 50.23L252.21 51.06L253 52L253.8 53.03L254.59 54.11L255.37 55.23L256.12 56.38L256.87 57.54L257.59 58.7L258.3 59.86L259 61L259.71 62.19L260.44 63.46L261.17 64.77L261.88 66.06L262.54 67.28L263.12 68.38L263.62 69.31L264 70" fill="none" stroke="#a4abcc" stroke-width="1"/>
<path d="M-6 39L-5.67 38.88L-5.37 38.76L-5.02 38.62L-4.56 38.44L-3.91 38.2L-2.98 37.9L-1.7 37.5L0 37L2.22 36.35L4.91 35.57L7.98 34.68L11.31 33.73L14.79 32.74L18.3 31.77L21.75 30.84L25 30L28.12 29.22L31.25 28.47L34.38 27.74L37.5 27.04L40.62 26.35L43.75 25.68L46.88 25.03L50 24.4L53.12 23.78L56.25 23.16L59.38 22.56L62.5 21.98L65.62 21.42L68.75 20.9L71.88 20.43L75 20L78.15 19.62L81.32 19.29L84.51 19L87.69 18.75L90.84 18.53L93.96 18.33L97.02 18.16L100 18L102.9 17.87L105.73 17.76L108.51 17.68L111.25 17.63L113.96 17.59L116.64 17.58L119.32 17.58L122 17.6L124.68 17.64L127.34 17.7L129.99 17.78L132.62 17.88L135.24 17.99L137.84 18.12L140.43 18.25L143 18.4L145.55 18.55L148.07 18.71L150.57 18.88L153.06 19.06L155.54 19.26L158.02 19.48L160.51 19.73L163 20L165.52 20.28L168.07 20.57L170.63 20.87L173.19 21.19L175.72 21.56L178.21 21.97L180.64 22.45L183 23L185.3 23.64L187.55 24.36L189.77 25.14L191.94 25.97L194.05 26.84L196.1 27.72L198.09 28.62L200 29.5L201.83 30.39L203.58 31.29L205.26 32.22L206.88 33.16L208.45 34.11L209.98 35.07L211.5 36.03L213 37L214.48 37.98L215.94 38.99L217.36 40.01L218.75 41.03L220.11 42.05L221.44 43.06L222.73 44.04L224 45L225.23 45.91L226.41 46.77L227.57 47.61L228.69 48.44L229.79 49.27L230.87 50.13L231.94 51.04L233 52L234.05 53.03L235.09 54.11L236.12 55.23L237.12 56.38L238.12 57.54L239.09 58.7L240.05 59.86L241 61L241.97 62.19L242.98 63.46L244.01 64.77L245 66.06L245.93 67.28L246.77 68.38L247.47 69.31L248 70" fill="none" stroke="#a4abcc" stroke-width="1"/>
<path d="M-6 284L-5.56 284.51L-5.02 285.16L-4.37 285.94L-3.62 286.81L-2.81 287.77L-1.92 288.8L-0.98 289.89L0 291L1.06 292.19L2.22 293.48L3.46 294.85L4.75 296.27L6.07 297.73L7.41 299.18L8.72 300.62L10 302L11.25 303.36L12.5 304.74L13.75 306.12L15 307.49L16.25 308.83L17.5 310.14L18.75 311.4L20 312.6L21.25 313.74L22.5 314.83L23.75 315.88L25 316.89L26.25 317.86L27.5 318.8L28.75 319.71L30 320.6L31.25 321.46L32.5 322.28L33.75 323.07L35 323.82L36.25 324.56L37.5 325.26L38.75 325.94L40 326.6L41.25 327.23L42.5 327.84L43.75 328.41L45 328.96L46.25 329.49L47.5 330.01L48.75 330.51L50 331L51.22 331.48L52.38 331.94L53.53 332.38L54.69 332.81L55.88 333.23L57.15 333.63L58.51 334.02L60 334.4L61.66 334.77L63.47 335.14L65.39 335.5L67.38 335.85L69.38 336.18L71.34 336.48L73.23 336.76L75 337L76.66 337.21L78.28 337.38L79.85 337.53L81.38 337.65L82.85 337.75L84.28 337.84L85.66 337.92L87 338L88.33 338.06L89.67 338.11L90.99 338.14L92.25 338.16L93.42 338.17L94.45 338.18L95.33 338.19L96 338.2L96 351.8L95.33 351.79L94.45 351.77L93.42 351.76L92.25 351.74L90.99 351.71L89.67 351.68L88.33 351.65L87 351.6L85.66 351.56L84.28 351.52L82.85 351.47L81.38 351.43L79.85 351.36L78.28 351.27L76.66 351.15L75 351L73.23 350.81L71.34 350.59L69.38 350.34L67.38 350.06L65.39 349.77L63.47 349.46L61.66 349.13L60 348.8L58.51 348.46L57.15 348.1L55.88 347.73L54.69 347.35L53.53 346.95L52.38 346.52L51.22 346.07L50 345.6L48.75 345.1L47.5 344.57L46.25 344.02L45 343.45L43.75 342.86L42.5 342.25L41.25 341.63L40 341L38.75 340.36L37.5 339.72L36.25 339.07L35 338.4L33.75 337.71L32.5 336.98L31.25 336.21L30 335.4L28.75 334.55L27.5 333.67L26.25 332.76L25 331.81L23.75 330.83L22.5 329.8L21.25 328.72L20 327.6L18.75 326.41L17.5 325.16L16.25 323.85L15 322.5L13.75 321.13L12.5 319.74L11.25 318.36L10 317L8.72 315.62L7.41 314.18L6.07 312.73L4.75 311.27L3.46 309.85L2.22 308.48L1.06 307.19L0 306L-0.98 304.89L-1.92 303.8L-2.81 302.77L-3.62 301.81L-4.37 300.94L-5.02 300.16L-5.56 299.51L-6 299Z" fill="#24339c"/>
<g fill="#181f5e" stroke="#1e2980" stroke-width="1.1"><circle cx="-6" cy="291.5" r="4.65"/><circle cx="-3.19" cy="294.78" r="3.14"/><circle cx="1.6" cy="300.24" r="3.1"/><circle cx="7.48" cy="306.75" r="3.14"/><circle cx="13.35" cy="313.15" r="3.15"/><circle cx="19.42" cy="319.28" r="3.37"/><circle cx="26.51" cy="325.39" r="3.69"/><circle cx="34.2" cy="330.62" r="3.91"/><circle cx="42.43" cy="334.93" r="4.04"/><circle cx="50.77" cy="338.59" r="4.21"/><circle cx="59.92" cy="341.57" r="4.35"/><circle cx="69.23" cy="343.24" r="4.34"/><circle cx="78.25" cy="344.33" r="4.29"/><circle cx="87.14" cy="344.81" r="4.21"/><circle cx="95.87" cy="345" r="4.22"/></g>
<path d="M-6 284L-5.56 284.51L-5.02 285.16L-4.37 285.94L-3.62 286.81L-2.81 287.77L-1.92 288.8L-0.98 289.89L0 291L1.06 292.19L2.22 293.48L3.46 294.85L4.75 296.27L6.07 297.73L7.41 299.18L8.72 300.62L10 302L11.25 303.36L12.5 304.74L13.75 306.12L15 307.49L16.25 308.83L17.5 310.14L18.75 311.4L20 312.6L21.25 313.74L22.5 314.83L23.75 315.88L25 316.89L26.25 317.86L27.5 318.8L28.75 319.71L30 320.6L31.25 321.46L32.5 322.28L33.75 323.07L35 323.82L36.25 324.56L37.5 325.26L38.75 325.94L40 326.6L41.25 327.23L42.5 327.84L43.75 328.41L45 328.96L46.25 329.49L47.5 330.01L48.75 330.51L50 331L51.22 331.48L52.38 331.94L53.53 332.38L54.69 332.81L55.88 333.23L57.15 333.63L58.51 334.02L60 334.4L61.66 334.77L63.47 335.14L65.39 335.5L67.38 335.85L69.38 336.18L71.34 336.48L73.23 336.76L75 337L76.66 337.21L78.28 337.38L79.85 337.53L81.38 337.65L82.85 337.75L84.28 337.84L85.66 337.92L87 338L88.33 338.06L89.67 338.11L90.99 338.14L92.25 338.16L93.42 338.17L94.45 338.18L95.33 338.19L96 338.2" fill="none" stroke="#a4abcc" stroke-width="1"/>
<path d="M-6 299L-5.56 299.51L-5.02 300.16L-4.37 300.94L-3.62 301.81L-2.81 302.77L-1.92 303.8L-0.98 304.89L0 306L1.06 307.19L2.22 308.48L3.46 309.85L4.75 311.27L6.07 312.73L7.41 314.18L8.72 315.62L10 317L11.25 318.36L12.5 319.74L13.75 321.13L15 322.5L16.25 323.85L17.5 325.16L18.75 326.41L20 327.6L21.25 328.72L22.5 329.8L23.75 330.83L25 331.81L26.25 332.76L27.5 333.67L28.75 334.55L30 335.4L31.25 336.21L32.5 336.98L33.75 337.71L35 338.4L36.25 339.07L37.5 339.72L38.75 340.36L40 341L41.25 341.63L42.5 342.25L43.75 342.86L45 343.45L46.25 344.02L47.5 344.57L48.75 345.1L50 345.6L51.22 346.07L52.38 346.52L53.53 346.95L54.69 347.35L55.88 347.73L57.15 348.1L58.51 348.46L60 348.8L61.66 349.13L63.47 349.46L65.39 349.77L67.38 350.06L69.38 350.34L71.34 350.59L73.23 350.81L75 351L76.66 351.15L78.28 351.27L79.85 351.36L81.38 351.43L82.85 351.47L84.28 351.52L85.66 351.56L87 351.6L88.33 351.65L89.67 351.68L90.99 351.71L92.25 351.74L93.42 351.76L94.45 351.77L95.33 351.79L96 351.8" fill="none" stroke="#a4abcc" stroke-width="1"/>
<path d="M312 -3L312.08 -2.82L312.1 -2.65L312.12 -2.45L312.19 -2.19L312.36 -1.84L312.68 -1.38L313.21 -0.78L314 0L315.11 0.99L316.5 2.19L318.11 3.54L319.88 5L321.71 6.52L323.56 8.06L325.35 9.57L327 11L328.58 12.38L330.16 13.77L331.75 15.17L333.31 16.56L334.84 17.95L336.3 19.32L337.7 20.67L339 22L340.19 23.3L341.28 24.57L342.29 25.82L343.25 27.06L344.18 28.29L345.09 29.52L346.03 30.76L347 32L348 33.26L349 34.52L350 35.79L351 37.06L352 38.32L353 39.57L354 40.8L355 42L356 43.19L357 44.37L358 45.54L359 46.69L360 47.82L361 48.91L362 49.98L363 51L363.99 51.98L364.98 52.91L365.96 53.82L366.94 54.69L367.93 55.54L368.93 56.37L369.95 57.19L371 58L372.08 58.81L373.18 59.61L374.3 60.39L375.44 61.16L376.58 61.9L377.73 62.63L378.87 63.33L380 64L381.16 64.65L382.37 65.3L383.59 65.93L384.81 66.53L385.99 67.1L387.1 67.62L388.11 68.09L389 68.5L389.77 68.84L390.45 69.12L391.04 69.35L391.56 69.53L392.01 69.68L392.4 69.8L392.73 69.9L393 70" fill="none" stroke="#cfd2d6" stroke-width="0.8"/>
<path d="M309.93 -2.27L309.93 -2.25L309.95 -2.07L309.99 -1.89L310.06 -1.63L310.12 -1.42L310.21 -1.22L310.38 -0.87L310.46 -0.72L310.56 -0.58L310.88 -0.12L311.03 0.07L311.56 0.67L311.67 0.79L312.46 1.57L312.53 1.64L313.64 2.63L313.67 2.66L315.07 3.86L315.09 3.87L316.7 5.23L316.71 5.23L318.47 6.69L320.31 8.22L322.15 9.75L323.92 11.24L325.55 12.66L327.12 14.04L328.71 15.43L330.29 16.82L331.84 18.2L333.35 19.57L334.79 20.91L336.15 22.23L337.4 23.51L338.55 24.76L339.59 25.98L340.57 27.19L341.5 28.4L342.42 29.61L343.33 30.84L343.34 30.85L344.27 32.08L344.29 32.11L345.27 33.36L345.28 33.37L346.28 34.62L347.27 35.89L348.27 37.15L349.27 38.42L349.28 38.43L350.28 39.69L350.28 39.7L351.28 40.95L351.29 40.96L352.29 42.19L352.31 42.2L353.31 43.41L353.32 43.42L354.32 44.6L354.32 44.61L355.32 45.79L355.33 45.8L356.33 46.97L356.34 46.98L357.34 48.13L357.35 48.15L358.35 49.27L358.37 49.3L359.37 50.39L359.4 50.42L360.4 51.48L360.43 51.52L361.43 52.54L361.46 52.57L362.45 53.55L362.48 53.57L363.46 54.51L363.49 54.53L364.47 55.43L364.49 55.46L365.48 56.33L365.51 56.36L366.49 57.21L366.52 57.23L367.53 58.06L367.55 58.08L368.58 58.9L368.6 58.92L369.65 59.74L369.68 59.76L370.76 60.57L370.79 60.59L371.89 61.39L371.92 61.41L373.04 62.19L373.07 62.21L374.21 62.98L374.23 63L375.38 63.75L375.4 63.76L376.55 64.49L376.58 64.5L377.72 65.2L377.75 65.22L378.88 65.89L378.92 65.92L380.08 66.57L380.12 66.59L381.33 67.24L381.36 67.26L382.59 67.89L382.62 67.9L383.84 68.5L383.86 68.51L385.04 69.08L385.05 69.09L386.16 69.61L386.18 69.62L387.19 70.09L387.19 70.09L388.08 70.5L388.11 70.51L388.87 70.85L388.93 70.88L389.61 71.16L389.66 71.18L390.26 71.4L390.31 71.42L390.83 71.61L390.88 71.62L391.33 71.77L391.35 71.78L391.73 71.9L392.03 71.99L392.28 72.08" fill="none" stroke="#cfd2d6" stroke-width="0.8"/>
<path d="M407.2 35A4.68 4.68 0 1 1 405.51 43.5M407.2 35L404.56 37.36M405.51 43.5A4.68 4.68 0 1 1 400.7 50.7M405.51 43.5L402.17 44.66M400.7 50.7A4.68 4.68 0 1 1 393.5 55.51M400.7 50.7L397.16 50.5M393.5 55.51A4.68 4.68 0 1 1 385 57.2M393.5 55.51L390.31 53.97M385 57.2A4.68 4.68 0 1 1 376.5 55.51M385 57.2L382.64 54.56M376.5 55.51A4.68 4.68 0 1 1 369.3 50.7M376.5 55.51L375.34 52.17M369.3 50.7A4.68 4.68 0 1 1 364.49 43.5M369.3 50.7L369.5 47.16M364.49 43.5A4.68 4.68 0 1 1 362.8 35M364.49 43.5L366.03 40.31M362.8 35A4.68 4.68 0 1 1 364.49 26.5M362.8 35L365.44 32.64M364.49 26.5A4.68 4.68 0 1 1 369.3 19.3M364.49 26.5L367.83 25.34M369.3 19.3A4.68 4.68 0 1 1 376.5 14.49M369.3 19.3L372.84 19.5M376.5 14.49A4.68 4.68 0 1 1 385 12.8M376.5 14.49L379.69 16.03M385 12.8A4.68 4.68 0 1 1 393.5 14.49M385 12.8L387.36 15.44M393.5 14.49A4.68 4.68 0 1 1 400.7 19.3M393.5 14.49L394.66 17.83M400.7 19.3A4.68 4.68 0 1 1 405.51 26.5M400.7 19.3L400.5 22.84M405.51 26.5A4.68 4.68 0 1 1 407.2 35M405.51 26.5L403.97 29.69" fill="none" stroke="#1b8f38" stroke-width="0.9"/>
<circle cx="385" cy="35" r="1" fill="#1b8f38"/>
<path d="M417 -19A4 4 0 1 1 415.55 -11.73M417 -19L414.38 -17.02M415.55 -11.73A4 4 0 1 1 411.44 -5.56M415.55 -11.73L412.38 -10.91M411.44 -5.56A4 4 0 1 1 405.27 -1.45M411.44 -5.56L408.19 -6.02M405.27 -1.45A4 4 0 1 1 398 0M405.27 -1.45L402.44 -3.11M398 0A4 4 0 1 1 390.73 -1.45M398 0L396.02 -2.62M390.73 -1.45A4 4 0 1 1 384.56 -5.56M390.73 -1.45L389.91 -4.62M384.56 -5.56A4 4 0 1 1 380.45 -11.73M384.56 -5.56L385.02 -8.81M380.45 -11.73A4 4 0 1 1 379 -19M380.45 -11.73L382.11 -14.56M379 -19A4 4 0 1 1 380.45 -26.27M379 -19L381.62 -20.98M380.45 -26.27A4 4 0 1 1 384.56 -32.44M380.45 -26.27L383.62 -27.09M384.56 -32.44A4 4 0 1 1 390.73 -36.55M384.56 -32.44L387.81 -31.98M390.73 -36.55A4 4 0 1 1 398 -38M390.73 -36.55L393.56 -34.89M398 -38A4 4 0 1 1 405.27 -36.55M398 -38L399.98 -35.38M405.27 -36.55A4 4 0 1 1 411.44 -32.44M405.27 -36.55L406.09 -33.38M411.44 -32.44A4 4 0 1 1 415.55 -26.27M411.44 -32.44L410.98 -29.19M415.55 -26.27A4 4 0 1 1 417 -19M415.55 -26.27L413.89 -23.44" fill="none" stroke="#1b8f38" stroke-width="0.9"/>
<circle cx="398" cy="-19" r="1" fill="#1b8f38"/>
<path d="M404.5 50 l5 1.5 l-3.5 4 z" fill="#22c04a"/>
<line x1="426" y1="0" x2="426" y2="69" stroke="#b9bcc0" stroke-width="0.9"/>
<line x1="437.6" y1="0" x2="437.6" y2="69" stroke="#b9bcc0" stroke-width="0.9"/>
<line x1="497.6" y1="0" x2="497.6" y2="69" stroke="#3a4150" stroke-width="0.8"/>
<text class="ss" x="441" y="17.92" font-size="14" fill="#dcdde0">一级水池</text>
<ellipse cx="549" cy="7" rx="14" ry="8" fill="none" stroke="#2f9a1e" stroke-width="1.2"/>
<path d="M539.2 4.2 q4.9 -1.6 7.7 4 q4.2 -5.6 11.9 -4M547.32 7.8 v6.4M550.68 7.8 v6.4" fill="none" stroke="#2f9a1e" stroke-width="1"/>
<ellipse cx="584" cy="7" rx="14.5" ry="8" fill="none" stroke="#2f9a1e" stroke-width="1.2"/>
<path d="M573.85 4.2 q5.07 -1.6 7.98 4 q4.35 -5.6 12.32 -4M582.26 7.8 v6.4M585.74 7.8 v6.4" fill="none" stroke="#2f9a1e" stroke-width="1"/>
<ellipse cx="517" cy="50" rx="14" ry="8" fill="none" stroke="#2f9a1e" stroke-width="1.2"/>
<path d="M507.2 47.2 q4.9 -1.6 7.7 4 q4.2 -5.6 11.9 -4M515.32 50.8 v6.4M518.68 50.8 v6.4" fill="none" stroke="#2f9a1e" stroke-width="1"/>
<ellipse cx="542" cy="61.5" rx="14" ry="7.5" fill="none" stroke="#2f9a1e" stroke-width="1.2"/>
<path d="M532.2 58.88 q4.9 -1.5 7.7 3.75 q4.2 -5.25 11.9 -3.75M540.32 62.25 v6M543.68 62.25 v6" fill="none" stroke="#2f9a1e" stroke-width="1"/>
<path d="M544 26C545.33 22.67 548.83 18.33 553 17C557.17 15.67 564.5 15.83 569 18C573.5 20.17 577.33 25.67 580 30C582.67 34.33 584.67 39.83 585 44C585.33 48.17 584 52.17 582 55C580 57.83 576.17 60.67 573 61C569.83 61.33 566.33 59 563 57C559.67 55 556 52.33 553 49C550 45.67 546.5 40.83 545 37C543.5 33.17 542.67 29.33 544 26Z" fill="none" stroke="#2b3889" stroke-width="1.1"/>
<path d="M550 30C550.83 28 553.17 24.83 556 24C558.83 23.17 563.83 23.33 567 25C570.17 26.67 573.17 30.83 575 34C576.83 37.17 578 41.33 578 44C578 46.67 576.67 48.5 575 50C573.33 51.5 570.5 53.17 568 53C565.5 52.83 562.33 50.67 560 49C557.67 47.33 555.5 45.17 554 43C552.5 40.83 551.67 38.17 551 36C550.33 33.83 549.17 32 550 30Z" fill="none" stroke="#2b3889" stroke-width="1"/>
<path d="M596 18C596.5 15.7 600.2 8.2 602 7C603.8 5.8 612.1 5.2 614 6C615.9 6.8 620.4 12.8 621 15C621.6 17.2 620.7 25.8 620 28C619.3 30.2 615.5 36 614 37C612.5 38 606.7 38.7 605 38C603.3 37.3 597.9 32 597 30C596.1 28 595.5 20.3 596 18Z" fill="none" stroke="#2b3889" stroke-width="1.1"/>
<path d="M601 19C601.3 17.4 603.8 11.9 605 11C606.2 10.1 611.8 9.4 613 10C614.2 10.6 616.7 15.3 617 17C617.3 18.7 616.5 25.5 616 27C615.5 28.5 613 31.4 612 32C611 32.6 607 33.5 606 33C605 32.5 602.5 28.4 602 27C601.5 25.6 600.7 20.6 601 19Z" fill="none" stroke="#2b3889" stroke-width="1"/>
<line x1="612" y1="28" x2="616" y2="28" stroke="#c8c8d0" stroke-width="1.2"/>
<rect x="628.5" y="0" width="9.5" height="37" fill="#181c23"/>
<line x1="628.3" y1="0" x2="628.3" y2="69" stroke="#b5b8bc" stroke-width="0.9"/>
<line x1="638.3" y1="0" x2="638.3" y2="69" stroke="#b5b8bc" stroke-width="0.9"/>
<line x1="628" y1="37.3" x2="638.6" y2="37.3" stroke="#e4e4e4" stroke-width="1.3"/>
<path d="M69.5 188C69.33 185.33 70.25 181.83 72 180C73.75 178.17 76.67 177.42 80 177C83.33 176.58 88.83 175.83 92 177.5C95.17 179.17 98.5 183.92 99 187C99.5 190.08 97.5 194.1 95 196C92.5 197.9 87.67 198.4 84 198.4C80.33 198.4 75.42 197.73 73 196C70.58 194.27 69.67 190.67 69.5 188Z" fill="none" stroke="#f0b912" stroke-width="2.6" stroke-linejoin="round"/>
<path d="M76 193C75.92 191.83 75 187.92 75.5 186C76 184.08 76.92 182.42 79 181.5C81.08 180.58 86.5 180.67 88 180.5" fill="none" stroke="#a88a28" stroke-width="0.8"/>
<path d="M17.2 233C16.98 229.53 21.07 224.05 24.7 221.6C28.33 219.15 34.52 218.13 39 218.3C43.48 218.47 48.93 220.15 51.6 222.6C54.27 225.05 55.37 229.47 55 233C54.63 236.53 52.07 241.53 49.4 243.8C46.73 246.07 42.9 246.83 39 246.6C35.1 246.37 29.63 244.67 26 242.4C22.37 240.13 17.42 236.47 17.2 233Z" fill="none" stroke="#f0b912" stroke-width="2.6" stroke-linejoin="round"/>
<path d="M22 236C22.33 234.67 22.33 230.07 24 228C25.67 225.93 29 224.43 32 223.6C35 222.77 39.33 222.43 42 223C44.67 223.57 46.67 225.17 48 227C49.33 228.83 50.33 231.83 50 234C49.67 236.17 48.33 238.9 46 240C43.67 241.1 39.17 240.6 36 240.6C32.83 240.6 28.5 240.1 27 240" fill="none" stroke="#a88a28" stroke-width="0.8"/>
<path d="M53 263C53.07 259.6 55.33 255.2 58.4 252.6C61.47 250 66.13 248.23 71.4 247.4C76.67 246.57 85.23 245.17 90 247.6C94.77 250.03 99.67 257.27 100 262C100.33 266.73 97 273.4 92 276C87 278.6 75.67 278.1 70 277.6C64.33 277.1 60.83 275.43 58 273C55.17 270.57 52.93 266.4 53 263Z" fill="none" stroke="#f0b912" stroke-width="2.6" stroke-linejoin="round"/>
<path d="M88 270.6C85.33 270.67 76.33 271.33 72 271C67.67 270.67 64.33 269.53 62 268.6C59.67 267.67 58.67 265.93 58 265.4" fill="none" stroke="#a88a28" stroke-width="0.8"/>
<text class="ss" x="44.1" y="418.5" font-size="36" fill="#ffffff">主</text>
<path d="M82.4 419 L88 415.8 L88 421.6 Z" fill="#ffffff"/>
<text class="ss" x="638.5" y="257.9" font-size="36.5" fill="#ffffff">入</text>
<text class="ss" x="677.2" y="257.9" font-size="34" fill="#ffffff">口</text>
<path d="M98 434 L108.2 442.6 L103.2 442.2 L103.2 453 L98 449.2 L92.8 453 L92.8 442.2 L87.8 442.6 Z" fill="#ffffff"/>
<path d="M-1 398 Q4 420 4.6 452" fill="none" stroke="#b9bcc0" stroke-width="0.9"/>
<path d="M-1 418 Q2.4 436 2.8 452" fill="none" stroke="#1fa83c" stroke-width="1.1"/>
<line x1="0" y1="452.4" x2="73.6" y2="452.4" stroke="#a9acb0" stroke-width="1"/>
<line x1="73.6" y1="452.4" x2="73.6" y2="463" stroke="#a9acb0" stroke-width="1"/>
<line x1="0" y1="462.8" x2="639" y2="462.8" stroke="#a9acb0" stroke-width="1.1"/>
<line x1="147.6" y1="452.4" x2="629" y2="452.4" stroke="#a9acb0" stroke-width="1"/>
<line x1="147.6" y1="452.4" x2="147.6" y2="463" stroke="#a9acb0" stroke-width="1"/>
<line x1="188" y1="425" x2="188" y2="463" stroke="#a9acb0" stroke-width="1.1"/>
<rect x="188.5" y="452.9" width="89.9" height="9.4" fill="#171b21"/>
<line x1="188.5" y1="456" x2="278.4" y2="456" stroke="#3a4048" stroke-width="0.7"/>
<line x1="188.5" y1="459.3" x2="278.4" y2="459.3" stroke="#3a4048" stroke-width="0.7"/>
<rect x="346.2" y="452.9" width="90" height="9.4" fill="#171b21"/>
<line x1="346.2" y1="456" x2="436.2" y2="456" stroke="#3a4048" stroke-width="0.7"/>
<line x1="346.2" y1="459.3" x2="436.2" y2="459.3" stroke="#3a4048" stroke-width="0.7"/>
<rect x="503" y="452.9" width="91.4" height="9.4" fill="#171b21"/>
<line x1="503" y1="456" x2="594.4" y2="456" stroke="#3a4048" stroke-width="0.7"/>
<line x1="503" y1="459.3" x2="594.4" y2="459.3" stroke="#3a4048" stroke-width="0.7"/>
<line x1="278.9" y1="452.4" x2="278.9" y2="463" stroke="#a9acb0" stroke-width="1"/>
<line x1="345.7" y1="452.4" x2="345.7" y2="463" stroke="#a9acb0" stroke-width="1"/>
<line x1="436.6" y1="452.4" x2="436.6" y2="463" stroke="#a9acb0" stroke-width="1"/>
<line x1="502.5" y1="452.4" x2="502.5" y2="463" stroke="#a9acb0" stroke-width="1"/>
<line x1="594.8" y1="452.4" x2="594.8" y2="463" stroke="#a9acb0" stroke-width="1"/>
<g fill="#191d5e"><rect x="231.3" y="426" width="2.8" height="10" /><rect x="238.8" y="426" width="2.8" height="10" /><rect x="246.3" y="426" width="2.8" height="10" /><rect x="253.8" y="426" width="2.8" height="10" /><rect x="261.3" y="426" width="2.8" height="10" /><rect x="268.8" y="426" width="2.8" height="10" /><rect x="276.3" y="426" width="2.8" height="10" /><rect x="283.8" y="426" width="2.8" height="10" /><rect x="291.3" y="426" width="2.8" height="10" /><rect x="298.8" y="426" width="2.8" height="10" /><rect x="306.3" y="426" width="2.8" height="10" /><rect x="313.8" y="426" width="2.8" height="10" /><rect x="321.3" y="426" width="2.8" height="10" /><rect x="328.8" y="426" width="2.8" height="10" /><rect x="336.3" y="426" width="2.8" height="10" /><rect x="343.8" y="426" width="2.8" height="10" /><rect x="351.3" y="426" width="2.8" height="10" /><rect x="358.8" y="426" width="2.8" height="10" /><rect x="366.3" y="426" width="2.8" height="10" /><rect x="373.8" y="426" width="2.8" height="10" /><rect x="381.3" y="426" width="2.8" height="10" /><rect x="388.8" y="426" width="2.8" height="10" /><rect x="396.3" y="426" width="2.8" height="10" /><rect x="403.8" y="426" width="2.8" height="10" /><rect x="411.3" y="426" width="2.8" height="10" /><rect x="418.8" y="426" width="2.8" height="10" /><rect x="426.3" y="426" width="2.8" height="10" /><rect x="433.8" y="426" width="2.8" height="10" /><rect x="441.3" y="426" width="2.8" height="10" /><rect x="448.8" y="426" width="2.8" height="10" /><rect x="456.3" y="426" width="2.8" height="10" /><rect x="463.8" y="426" width="2.8" height="10" /><rect x="471.3" y="426" width="2.8" height="10" /><rect x="478.8" y="426" width="2.8" height="10" /><rect x="486.3" y="426" width="2.8" height="10" /><rect x="493.8" y="426" width="2.8" height="10" /><rect x="501.3" y="426" width="2.8" height="10" /><rect x="508.8" y="426" width="2.8" height="10" /><rect x="516.3" y="426" width="2.8" height="10" /><rect x="523.8" y="426" width="2.8" height="10" /><rect x="531.3" y="426" width="2.8" height="10" /><rect x="538.8" y="426" width="2.8" height="10" /><rect x="546.3" y="426" width="2.8" height="10" /><rect x="553.8" y="426" width="2.8" height="10" /><rect x="561.3" y="426" width="2.8" height="10" /><rect x="568.8" y="426" width="2.8" height="10" /><rect x="576.3" y="426" width="2.8" height="10" /><rect x="583.8" y="426" width="2.8" height="10" /><rect x="591.3" y="426" width="2.8" height="10" /><rect x="598.8" y="426" width="2.8" height="10" /></g>
<line x1="228" y1="436.8" x2="611" y2="436.8" stroke="#8f97b3" stroke-width="0.9" stroke-dasharray="2.6 0.8"/>
<line x1="228" y1="440.5" x2="629" y2="440.5" stroke="#9fa3a8" stroke-width="1"/>
<rect x="200" y="436.9" width="19" height="3.4" fill="none" stroke="#d5d7da" stroke-width="0.8"/>
<line x1="196" y1="438.6" x2="230" y2="438.6" stroke="#d5d7da" stroke-width="0.8"/>
<rect x="216.6" y="431.4" width="10.8" height="13.6" fill="#0f4a19"/>
<line x1="219.9" y1="426" x2="219.9" y2="452" stroke="#d5d8da" stroke-width="0.9" stroke-dasharray="4 1.6"/>
<line x1="224.1" y1="426" x2="224.1" y2="452" stroke="#d5d8da" stroke-width="0.9" stroke-dasharray="4 1.6"/>
<line x1="215" y1="436.7" x2="229" y2="436.7" stroke="#cfd2d5" stroke-width="0.7"/>
<line x1="215" y1="440.2" x2="229" y2="440.2" stroke="#cfd2d5" stroke-width="0.7"/>
<rect x="347.1" y="431.4" width="10.8" height="13.6" fill="#0f4a19"/>
<line x1="350.4" y1="426" x2="350.4" y2="452" stroke="#d5d8da" stroke-width="0.9" stroke-dasharray="4 1.6"/>
<line x1="354.6" y1="426" x2="354.6" y2="452" stroke="#d5d8da" stroke-width="0.9" stroke-dasharray="4 1.6"/>
<line x1="345.5" y1="436.7" x2="359.5" y2="436.7" stroke="#cfd2d5" stroke-width="0.7"/>
<line x1="345.5" y1="440.2" x2="359.5" y2="440.2" stroke="#cfd2d5" stroke-width="0.7"/>
<rect x="478" y="431.4" width="10.8" height="13.6" fill="#0f4a19"/>
<line x1="481.3" y1="426" x2="481.3" y2="452" stroke="#d5d8da" stroke-width="0.9" stroke-dasharray="4 1.6"/>
<line x1="485.5" y1="426" x2="485.5" y2="452" stroke="#d5d8da" stroke-width="0.9" stroke-dasharray="4 1.6"/>
<line x1="476.4" y1="436.7" x2="490.4" y2="436.7" stroke="#cfd2d5" stroke-width="0.7"/>
<line x1="476.4" y1="440.2" x2="490.4" y2="440.2" stroke="#cfd2d5" stroke-width="0.7"/>
<rect x="607" y="431.5" width="11.4" height="12.5" fill="#0f4a19"/>
<line x1="611.3" y1="426" x2="611.3" y2="452" stroke="#d5d8da" stroke-width="0.9"/>
<line x1="615.4" y1="426" x2="615.4" y2="452" stroke="#d5d8da" stroke-width="0.9"/>
<line x1="600.4" y1="426" x2="611.5" y2="437" stroke="#c5c8cc" stroke-width="0.9"/>
<line x1="603.6" y1="426" x2="613.8" y2="436" stroke="#c5c8cc" stroke-width="0.9"/>
<line x1="629" y1="425" x2="629" y2="463" stroke="#a9acb0" stroke-width="1"/>
<line x1="638.8" y1="425" x2="638.8" y2="463" stroke="#a9acb0" stroke-width="1"/>
<line x1="615" y1="436.8" x2="629" y2="436.8" stroke="#c5c8cc" stroke-width="0.8"/>
<line x1="615" y1="440.5" x2="629" y2="440.5" stroke="#c5c8cc" stroke-width="0.8"/>
<line x1="213" y1="441" x2="213" y2="500" stroke="#2b3270" stroke-width="0.9"/>
<line x1="373.8" y1="441" x2="373.8" y2="500" stroke="#2b3270" stroke-width="0.9"/>
<line x1="421" y1="441" x2="421" y2="500" stroke="#2b3270" stroke-width="0.9"/>
<g>
<rect x="616.3" y="455.6" width="41.8" height="32" fill="#2a3038" stroke="#696d72" stroke-width="3.3" rx="4"/>
<text class="ss" x="623.2" y="473.9" font-size="15" font-weight="bold" fill="#696d72" textLength="14.1" lengthAdjust="spacingAndGlyphs">AI</text>
<path d="M630 489 L630 481 Q634 476 638 479 Q643 467 647.5 468.4 Q652 470 656 480 L659.6 483 L659.6 489 Z" fill="#696d72"/>
</g>
<text class="ss" x="664.4" y="476.82" font-size="14.8" font-weight="bold" fill="#6d7176">树叶云</text>
<text class="ss" x="573.2" y="489.13" font-size="13.5" font-weight="bold" fill="#ffffff">搜狐号</text>
<text class="ss" x="659.4" y="489.13" font-size="13.5" font-weight="bold" fill="#ffffff">牛测绘</text>
<defs><filter id="bl" x="-20%" y="-40%" width="140%" height="180%"><feGaussianBlur stdDeviation="1.6"/></filter></defs>
<path d="M616 490 Q617 481 624 481 Q630 480 633 484 Q637 479 642 481 Q648 478 652 482 Q658 482 658 490 Z" fill="#85888c" filter="url(#bl)"/>
<rect x="87" y="68.7" width="553.3" height="356.9" fill="#f0f0f0"/>
<rect x="87" y="68.7" width="553.3" height="20.6" fill="#ffffff"/>
<rect x="87" y="68.7" width="3" height="356.9" fill="#f9f9f9"/>
<rect x="634.3" y="68.7" width="6" height="356.9" fill="#f9f9f9"/>
<rect x="87" y="421" width="553.3" height="4.6" fill="#f9f9f9"/>
<path d="M93.5 82.8 L96.5 74.4 L99 74.4 L102 82.8 L99.4 82.8 L98.9 81 L96.6 81 L96.1 82.8 Z M97.1 79.3 L98.4 79.3 L97.75 77 Z" fill="#c4222b" fill-rule="evenodd"/>
<text class="ss" x="105.8" y="82.43" font-size="8.5" fill="#000" textLength="41.8" lengthAdjust="spacingAndGlyphs">打印 - 模型</text>
<path d="M625 75.6 L632 82.6 M632 75.6 L625 82.6" fill="none" stroke="#222" stroke-width="0.9"/>
<rect x="93" y="101.8" width="363" height="34.7" fill="none" stroke="#e4e4e4" stroke-width="1"/>
<rect x="96.3" y="99.3" width="36.2" height="5" fill="#f0f0f0"/>
<text x="97.8" y="104.15" font-size="8.3" fill="#111">页面设置</text>
<text x="103.4" y="124.15" font-size="8.3" fill="#111" textLength="33.2" lengthAdjust="spacingAndGlyphs">名称(A):</text>
<rect x="151.9" y="114.8" width="215.4" height="13.3" fill="#e2e2e2" stroke="#bfbfbf" stroke-width="1"/>
<path d="M358.9 120.4 L361.3 122.9 L363.7 120.4" fill="none" stroke="#555" stroke-width="0.95"/>
<text x="154.4" y="124.8" font-size="8.3" fill="#111" textLength="16.6" lengthAdjust="spacingAndGlyphs">&lt;无&gt;</text>
<rect x="372.5" y="115.5" width="71.4" height="12.2" fill="#e2e2e2" stroke="#b4b4b4" stroke-width="1"/>
<text x="387.45" y="124.95" font-size="8.3" fill="#111" textLength="41.5" lengthAdjust="spacingAndGlyphs">添加(.)...</text>
<rect x="93" y="145.9" width="363" height="94.1" fill="none" stroke="#e4e4e4" stroke-width="1"/>
<rect x="96.7" y="143.4" width="56.95" height="5" fill="#f0f0f0"/>
<text x="98.2" y="148.25" font-size="8.3" fill="#111" textLength="53.95" lengthAdjust="spacingAndGlyphs">打印机/绘图仪</text>
<text x="103.4" y="163.45" font-size="8.3" fill="#111" textLength="33.2" lengthAdjust="spacingAndGlyphs">名称(M):</text>
<rect x="151.9" y="154.3" width="202.2" height="11.2" fill="#e2e2e2" stroke="#9a9a9a" stroke-width="1"/>
<rect x="356.5" y="154.3" width="10.8" height="11.2" fill="#efefef" stroke="#c8c8c8" stroke-width="1"/>
<path d="M359.6 158.9 L361.9 161.3 L364.2 158.9" fill="none" stroke="#444" stroke-width="0.9"/>
<path d="M157 155.2 h4.8 l2.2 2.2 v5 l-2.2 2.3 h-4.8 l-2.2 -2.3 v-5 z" fill="#262626"/>
<rect x="156.9" y="156.9" width="5" height="1.8" fill="#ffffff"/>
<rect x="156.9" y="160.6" width="5" height="2.2" fill="#ffffff"/>
<text x="165.8" y="163.35" font-size="8.3" fill="#111">无</text>
<rect x="372.5" y="153.9" width="71.4" height="12.6" fill="#cccccc" stroke="#c2c2c2" stroke-width="1"/>
<text x="387.45" y="163.55" font-size="8.3" fill="#8e8e8e" textLength="41.5" lengthAdjust="spacingAndGlyphs">特性(R)...</text>
<text x="103.8" y="181.35" font-size="8.3" fill="#111" textLength="29.05" lengthAdjust="spacingAndGlyphs">绘图仪:</text>
<text x="151.8" y="181.35" font-size="8.3" fill="#111">无</text>
<text x="103.8" y="196.55" font-size="8.3" fill="#111" textLength="20.75" lengthAdjust="spacingAndGlyphs">位置:</text>
<text x="151.8" y="196.55" font-size="8.3" fill="#111">不可用</text>
<text x="103.8" y="212.15" font-size="8.3" fill="#111" textLength="20.75" lengthAdjust="spacingAndGlyphs">说明:</text>
<text x="152" y="212.15" font-size="8.3" fill="#111" textLength="192.7">在选择新的绘图仪配置名称之前，不能打印该布局。</text>
<rect x="103.65" y="224.15" width="7.3" height="7.3" fill="#f7f7f7" stroke="#c4c4c4" stroke-width="0.9"/>
<text x="114.3" y="231.15" font-size="8.3" fill="#939393" textLength="53.95" lengthAdjust="spacingAndGlyphs">打印到文件(F)</text>
<rect x="371.8" y="173.9" width="73.2" height="62.4" fill="#21252c"/>
<defs><pattern id="hat" width="2.3" height="2.3" patternUnits="userSpaceOnUse" patternTransform="rotate(-52)"><rect width="2.3" height="2.3" fill="#2e3239"/><rect width="2.3" height="0.95" fill="#b4b6b9"/></pattern></defs>
<rect x="385.6" y="186.6" width="33.4" height="46.4" fill="none" stroke="#b9bbbe" stroke-width="0.8"/>
<rect x="388.6" y="191" width="29.6" height="40" fill="url(#hat)" stroke="#d2d3d5" stroke-width="0.7"/>
<line x1="420.1" y1="182.8" x2="420.1" y2="235.4" stroke="#e01b1b" stroke-width="1.5"/>
<line x1="384.4" y1="234.6" x2="420.8" y2="234.6" stroke="#e01b1b" stroke-width="1.5"/>
<text x="388.95" y="183.5" font-size="7.5" fill="#e9e9ea" textLength="27.3" lengthAdjust="spacingAndGlyphs">210 MM</text>
<path d="M376.4 181 h8.6 M420 181 h8.6 M385.6 176 v9.8 M419.2 176 v6.6" fill="none" stroke="#d8d9db" stroke-width="0.8"/>
<path d="M385.4 181 l-3.4 -1.4 v2.8 z M419.6 181 l3.4 -1.4 v2.8 z" fill="#f0f0f0"/>
<text transform="translate(423.2 210.6) rotate(90)" x="-14.4" y="0" font-size="7.5" fill="#e9e9ea" textLength="28.8" lengthAdjust="spacingAndGlyphs">297 MM</text>
<path d="M425.8 187 v8 M425.8 226.4 v6.4 M422 186.6 h7.6 M422 233 h7.6" fill="none" stroke="#d8d9db" stroke-width="0.8"/>
<path d="M425.8 186.8 l-1.4 3.4 h2.8 z M425.8 232.8 l-1.4 -3.4 h2.8 z" fill="#f0f0f0"/>
<rect x="93" y="252.7" width="260.5" height="28.8" fill="none" stroke="#e4e4e4" stroke-width="1"/>
<rect x="96.7" y="250.2" width="48.65" height="5" fill="#f0f0f0"/>
<text x="98.2" y="255.05" font-size="8.3" fill="#111" textLength="45.65" lengthAdjust="spacingAndGlyphs">图纸尺寸(Z)</text>
<rect x="103.5" y="261.3" width="242.8" height="13.4" fill="#e2e2e2" stroke="#bfbfbf" stroke-width="1"/>
<path d="M337.9 266.95 L340.3 269.45 L342.7 266.95" fill="none" stroke="#555" stroke-width="0.95"/>
<text x="105.3" y="271.35" font-size="8.3" fill="#111" textLength="124.5" lengthAdjust="spacingAndGlyphs" xml:space="preserve">ISO A4  (210.00 x 297.00 毫米)</text>
<rect x="359.9" y="252.3" width="96.1" height="29.2" fill="none" stroke="#e4e4e4" stroke-width="1"/>
<rect x="363.5" y="249.8" width="48.65" height="5" fill="#f0f0f0"/>
<text x="365" y="254.65" font-size="8.3" fill="#111" textLength="45.65" lengthAdjust="spacingAndGlyphs">打印份数(B)</text>
<rect x="385.1" y="260.5" width="42.4" height="13" fill="#f4f4f4" stroke="#cfcfcf" stroke-width="1"/>
<text x="387.6" y="270.35" font-size="9.3" fill="#9a9a9a" textLength="4.15" lengthAdjust="spacingAndGlyphs">1</text>
<rect x="417.4" y="261.4" width="9.2" height="11.2" fill="#f8f8f8" stroke="#d5d5d5" stroke-width="0.8"/>
<path d="M420.2 265.4 l1.8 -1.8 l1.8 1.8 M420.2 268.8 l1.8 1.8 l1.8 -1.8" fill="none" stroke="#555" stroke-width="0.9"/>
<rect x="93" y="291.9" width="194.5" height="41.6" fill="none" stroke="#e4e4e4" stroke-width="1"/>
<rect x="96.7" y="289.4" width="36.2" height="5" fill="#f0f0f0"/>
<text x="98.2" y="294.25" font-size="8.3" fill="#111">打印区域</text>
<text x="103.2" y="307.95" font-size="8.3" fill="#111" textLength="49.8" lengthAdjust="spacingAndGlyphs">打印范围(W):</text>
<rect x="103.5" y="313.7" width="72.6" height="13.1" fill="#e2e2e2" stroke="#bfbfbf" stroke-width="1"/>
<path d="M167.7 319.2 L170.1 321.7 L172.5 319.2" fill="none" stroke="#555" stroke-width="0.95"/>
<text x="106" y="323.6" font-size="8.3" fill="#111">显示</text>
<rect x="93" y="345.1" width="194.5" height="53.9" fill="none" stroke="#e4e4e4" stroke-width="1"/>
<rect x="96.7" y="342.6" width="127.5" height="5" fill="#f0f0f0"/>
<text x="98.2" y="347.45" font-size="8.3" fill="#111" textLength="124.5" lengthAdjust="spacingAndGlyphs">打印偏移(原点设置在可打印区域)</text>
<text x="103.2" y="365.75" font-size="9.3" fill="#111" textLength="8.3" lengthAdjust="spacingAndGlyphs">X:</text>
<rect x="118.3" y="354.1" width="51.9" height="13.7" fill="#ffffff" stroke="#7a7a7a" stroke-width="1"/>
<text x="120.4" y="363.2" font-size="9.3" fill="#111" textLength="20.75" lengthAdjust="spacingAndGlyphs">11.55</text>
<text x="176" y="363.35" font-size="8.3" fill="#111">毫米</text>
<rect x="215.65" y="356.85" width="7.9" height="7.9" fill="#ffffff" stroke="#333" stroke-width="0.9"/>
<text x="226.9" y="364.15" font-size="8.3" fill="#111" textLength="45.65" lengthAdjust="spacingAndGlyphs">居中打印(C)</text>
<text x="103.2" y="386.15" font-size="9.3" fill="#111" textLength="8.3" lengthAdjust="spacingAndGlyphs">Y:</text>
<rect x="118.3" y="375.1" width="51.9" height="13.7" fill="#ffffff" stroke="#7a7a7a" stroke-width="1"/>
<text x="120.4" y="384.2" font-size="9.3" fill="#111" textLength="24.9" lengthAdjust="spacingAndGlyphs">-13.65</text>
<text x="176" y="384.35" font-size="8.3" fill="#111">毫米</text>
<rect x="292.1" y="291.3" width="163.9" height="108" fill="none" stroke="#e4e4e4" stroke-width="1"/>
<rect x="295.8" y="288.8" width="36.2" height="5" fill="#f0f0f0"/>
<text x="297.3" y="293.65" font-size="8.3" fill="#111">打印比例</text>
<rect x="298.05" y="303.2" width="8.4" height="8.4" fill="#ffffff" stroke="#333" stroke-width="0.9"/>
<path d="M299.4 307.6 l1.9 1.9 l3.4 -3.9" fill="none" stroke="#222" stroke-width="1"/>
<text x="309.8" y="310.75" font-size="8.3" fill="#111" textLength="45.65" lengthAdjust="spacingAndGlyphs">布满图纸(I)</text>
<text x="298.4" y="328.15" font-size="8.3" fill="#111" textLength="33.2" lengthAdjust="spacingAndGlyphs">比例(S):</text>
<rect x="336.7" y="319.9" width="109.9" height="12.2" fill="#cdcdcd" stroke="#c6c6c6" stroke-width="1"/>
<path d="M438.2 324.95 L440.6 327.45 L443 324.95" fill="none" stroke="#b5b5b5" stroke-width="0.95"/>
<text x="339.2" y="329.35" font-size="8.3" fill="#9a9a9a">自定义</text>
<rect x="336.7" y="339.5" width="43.2" height="12.2" fill="#f0f0f0" stroke="#cfcfcf" stroke-width="1"/>
<text x="338.8" y="347.85" font-size="9.3" fill="#858585" textLength="4.15" lengthAdjust="spacingAndGlyphs">1</text>
<rect x="383.2" y="339.5" width="51.3" height="12.2" fill="#e2e2e2" stroke="#bfbfbf" stroke-width="1"/>
<path d="M426.1 344.55 L428.5 347.05 L430.9 344.55" fill="none" stroke="#555" stroke-width="0.95"/>
<text x="385.7" y="348.95" font-size="8.3" fill="#111">毫米</text>
<text x="438.5" y="348.55" font-size="9.3" fill="#555" textLength="4.15" lengthAdjust="spacingAndGlyphs">=</text>
<rect x="336.7" y="358.9" width="43.2" height="12.4" fill="#f0f0f0" stroke="#cfcfcf" stroke-width="1"/>
<text x="338.8" y="367.35" font-size="9.3" fill="#858585" textLength="20.75" lengthAdjust="spacingAndGlyphs">166.8</text>
<text x="383.2" y="368.55" font-size="8.3" fill="#939393" textLength="29.05" lengthAdjust="spacingAndGlyphs">单位(N)</text>
<rect x="336.65" y="380.45" width="7.5" height="7.5" fill="#f7f7f7" stroke="#c4c4c4" stroke-width="0.9"/>
<text x="347.5" y="387.55" font-size="8.3" fill="#939393" textLength="45.65" lengthAdjust="spacingAndGlyphs">缩放线宽(L)</text>
<rect x="93.7" y="405.1" width="57.8" height="11.9" fill="#cccccc" stroke="#c2c2c2" stroke-width="1"/>
<text x="101.85" y="414.4" font-size="8.3" fill="#8e8e8e" textLength="41.5" lengthAdjust="spacingAndGlyphs">预览(P)...</text>
<rect x="338.4" y="405.1" width="78.8" height="11.9" fill="#cccccc" stroke="#c2c2c2" stroke-width="1"/>
<text x="350.82" y="414.4" font-size="8.3" fill="#8e8e8e" textLength="53.95" lengthAdjust="spacingAndGlyphs">应用到布局(U)</text>
<rect x="422.6" y="405" width="54" height="12.1" fill="#e3e3e3" stroke="#1979d8" stroke-width="1.4"/>
<text x="441.3" y="414.4" font-size="8.3" fill="#111">确定</text>
<rect x="483.1" y="405.1" width="53.9" height="11.9" fill="#e2e2e2" stroke="#b4b4b4" stroke-width="1"/>
<text x="501.75" y="414.4" font-size="8.3" fill="#111">取消</text>
<rect x="542.7" y="405.1" width="54.2" height="11.9" fill="#e2e2e2" stroke="#b4b4b4" stroke-width="1"/>
<text x="555.27" y="414.4" font-size="8.3" fill="#111" textLength="29.05" lengthAdjust="spacingAndGlyphs">帮助(H)</text>
<circle cx="608.9" cy="410.6" r="6.6" fill="#fdfdfd" stroke="#555" stroke-width="1"/>
<path d="M610.6 407.2 L606.8 410.6 L610.6 414" fill="none" stroke="#222" stroke-width="1.8"/>
<rect x="465.7" y="101.8" width="165.8" height="34.7" fill="none" stroke="#e4e4e4" stroke-width="1"/>
<rect x="468.8" y="99.3" width="98.45" height="5" fill="#f0f0f0"/>
<text x="470.3" y="104.15" font-size="8.3" fill="#111" textLength="95.45" lengthAdjust="spacingAndGlyphs">打印样式表(画笔指定)(G)</text>
<rect x="477.8" y="114.8" width="124.6" height="13.3" fill="#e2e2e2" stroke="#bfbfbf" stroke-width="1"/>
<path d="M594 120.4 L596.4 122.9 L598.8 120.4" fill="none" stroke="#555" stroke-width="0.95"/>
<text x="480.3" y="124.8" font-size="8.3" fill="#111">无</text>
<rect x="604.7" y="115.7" width="15.7" height="14.9" fill="#cecece" stroke="#c6c6c6" stroke-width="1"/>
<rect x="608" y="118.3" width="8.2" height="2.2" fill="#6e6e6e"/>
<rect x="609.6" y="118.3" width="1.4" height="2.2" fill="#d8d8d8"/>
<rect x="613.4" y="118.3" width="1.2" height="2.2" fill="#d8d8d8"/>
<rect x="608" y="122.4" width="8.2" height="1.4" fill="#777"/>
<rect x="611.6" y="122" width="1.4" height="2.2" fill="#555"/>
<rect x="608" y="125.8" width="8.2" height="1.8" fill="#6e6e6e"/>
<circle cx="609.6" cy="126.7" r="1.5" fill="#cecece" stroke="#555" stroke-width="0.7"/>
<rect x="465.7" y="145.9" width="165.8" height="63.1" fill="none" stroke="#e4e4e4" stroke-width="1"/>
<rect x="468.8" y="143.4" width="52.8" height="5" fill="#f0f0f0"/>
<text x="470.3" y="148.25" font-size="8.3" fill="#111">着色视口选项</text>
<text x="477.3" y="164.45" font-size="8.3" fill="#111" textLength="45.65" lengthAdjust="spacingAndGlyphs">着色打印(D)</text>
<rect x="530.8" y="155.1" width="92.7" height="12.5" fill="#e2e2e2" stroke="#bfbfbf" stroke-width="1"/>
<path d="M615.1 160.3 L617.5 162.8 L619.9 160.3" fill="none" stroke="#555" stroke-width="0.95"/>
<text x="533.3" y="164.7" font-size="8.3" fill="#111">按显示</text>
<text x="477.3" y="183.45" font-size="8.3" fill="#111" textLength="29.05" lengthAdjust="spacingAndGlyphs">质量(Q)</text>
<rect x="530.8" y="173.2" width="92.7" height="13.2" fill="#e2e2e2" stroke="#bfbfbf" stroke-width="1"/>
<path d="M615.1 178.75 L617.5 181.25 L619.9 178.75" fill="none" stroke="#555" stroke-width="0.95"/>
<text x="533.3" y="183.15" font-size="8.3" fill="#111">常规</text>
<text x="477.3" y="201.95" font-size="9.3" fill="#a8a8a8" textLength="12.45" lengthAdjust="spacingAndGlyphs">DPI</text>
<rect x="530.8" y="191" width="92.7" height="12.9" fill="#f0f0f0" stroke="#cfcfcf" stroke-width="1"/>
<rect x="465.7" y="219.1" width="165.8" height="122.2" fill="none" stroke="#e4e4e4" stroke-width="1"/>
<rect x="468.8" y="216.6" width="36.2" height="5" fill="#f0f0f0"/>
<text x="470.3" y="221.45" font-size="8.3" fill="#111">打印选项</text>
<rect x="477.75" y="229.05" width="7.5" height="7.5" fill="#ffffff" stroke="#333" stroke-width="0.9"/>
<text x="488.6" y="236.15" font-size="8.3" fill="#111" textLength="45.65" lengthAdjust="spacingAndGlyphs">后台打印(K)</text>
<rect x="477.75" y="241.85" width="7.5" height="7.5" fill="#ffffff" stroke="#333" stroke-width="0.9"/>
<path d="M479.1 245.8 l1.9 1.9 l3.4 -3.9" fill="none" stroke="#222" stroke-width="1"/>
<text x="488.6" y="248.95" font-size="8.3" fill="#111">打印对象线宽</text>
<rect x="477.75" y="255.65" width="7.5" height="7.5" fill="#ffffff" stroke="#333" stroke-width="0.9"/>
<text x="488.6" y="262.75" font-size="8.3" fill="#111" textLength="70.55" lengthAdjust="spacingAndGlyphs">使用透明度打印(T)</text>
<rect x="477.75" y="269.95" width="7.5" height="7.5" fill="#ffffff" stroke="#333" stroke-width="0.9"/>
<path d="M479.1 273.9 l1.9 1.9 l3.4 -3.9" fill="none" stroke="#222" stroke-width="1"/>
<text x="488.6" y="277.05" font-size="8.3" fill="#111" textLength="53.95" lengthAdjust="spacingAndGlyphs">按样式打印(E)</text>
<rect x="477.75" y="284.25" width="7.5" height="7.5" fill="#f7f7f7" stroke="#c4c4c4" stroke-width="0.9"/>
<path d="M479.1 288.2 l1.9 1.9 l3.4 -3.9" fill="none" stroke="#c0c0c0" stroke-width="1"/>
<text x="488.6" y="291.35" font-size="8.3" fill="#939393">最后打印图纸空间</text>
<rect x="477.75" y="298.55" width="7.5" height="7.5" fill="#f7f7f7" stroke="#c4c4c4" stroke-width="0.9"/>
<text x="488.6" y="305.65" font-size="8.3" fill="#939393" textLength="78.85" lengthAdjust="spacingAndGlyphs">隐藏图纸空间对象(J)</text>
<rect x="477.75" y="313.45" width="7.5" height="7.5" fill="#ffffff" stroke="#333" stroke-width="0.9"/>
<text x="488.6" y="320.55" font-size="8.3" fill="#111">打开打印戳记</text>
<rect x="477.75" y="328.55" width="7.5" height="7.5" fill="#ffffff" stroke="#333" stroke-width="0.9"/>
<text x="488.6" y="335.65" font-size="8.3" fill="#111" textLength="78.85" lengthAdjust="spacingAndGlyphs">将修改保存到布局(V)</text>
<rect x="465.7" y="348.5" width="165.8" height="49" fill="none" stroke="#e4e4e4" stroke-width="1"/>
<rect x="468.8" y="346" width="36.2" height="5" fill="#f0f0f0"/>
<text x="470.3" y="350.85" font-size="8.3" fill="#111">图形方向</text>
<circle cx="481.5" cy="362.6" r="4" fill="#fff" stroke="#333" stroke-width="0.9"/>
<circle cx="481.5" cy="362.6" r="2.5" fill="#222"/>
<text x="488.5" y="365.95" font-size="8.3" fill="#111">纵向</text>
<circle cx="481.5" cy="374.6" r="4" fill="#fff" stroke="#333" stroke-width="0.9"/>
<text x="488.5" y="377.95" font-size="8.3" fill="#111">横向</text>
<rect x="477.75" y="385.75" width="7.5" height="7.5" fill="#ffffff" stroke="#333" stroke-width="0.9"/>
<text x="488.6" y="392.85" font-size="8.3" fill="#111" textLength="62.25" lengthAdjust="spacingAndGlyphs">上下颠倒打印(-)</text>
<defs><linearGradient id="pg" x1="0" y1="0" x2="0" y2="1"><stop offset="0" stop-color="#e3eef9"/><stop offset="1" stop-color="#bdd5ec"/></linearGradient></defs>
<path d="M604.2 366 h13 l5.2 5.2 v17.4 h-18.2 z" fill="url(#pg)" stroke="#8aa6c4" stroke-width="0.9"/>
<path d="M617.2 366 v5.2 h5.2" fill="#f6fafd" stroke="#8aa6c4" stroke-width="0.8"/>
<text class="ss" x="613.2" y="384.8" font-size="13.6" font-weight="bold" text-anchor="middle" fill="#1c1c1c">A</text></svg><div class="sr">打印 - 模型 页面设置 名称(A): &lt;无&gt; 添加(.)... 打印机/绘图仪 名称(M): 无 特性(R)... 绘图仪: 无 位置: 不可用 说明: 在选择新的绘图仪配置名称之前，不能打印该布局。 打印到文件(F) 图纸尺寸(Z) ISO A4 (210.00 x 297.00 毫米) 打印份数(B) 1 打印区域 打印范围(W): 显示 打印偏移(原点设置在可打印区域) X: 11.55 毫米 居中打印(C) Y: -13.65 毫米 打印比例 布满图纸(I) 比例(S): 自定义 1 毫米 = 166.8 单位(N) 缩放线宽(L) 预览(P)... 应用到布局(U) 确定 取消 帮助(H) 打印样式表(画笔指定)(G) 无 着色视口选项 着色打印(D) 按显示 质量(Q) 常规 DPI 打印选项 后台打印(K) 打印对象线宽 使用透明度打印(T) 按样式打印(E) 最后打印图纸空间 隐藏图纸空间对象(J) 打开打印戳记 将修改保存到布局(V) 图形方向 纵向 横向 上下颠倒打印(-) 一级水池 主 入口 搜狐号 牛测绘 树叶云 210 MM 297 MM</div></body></html>
